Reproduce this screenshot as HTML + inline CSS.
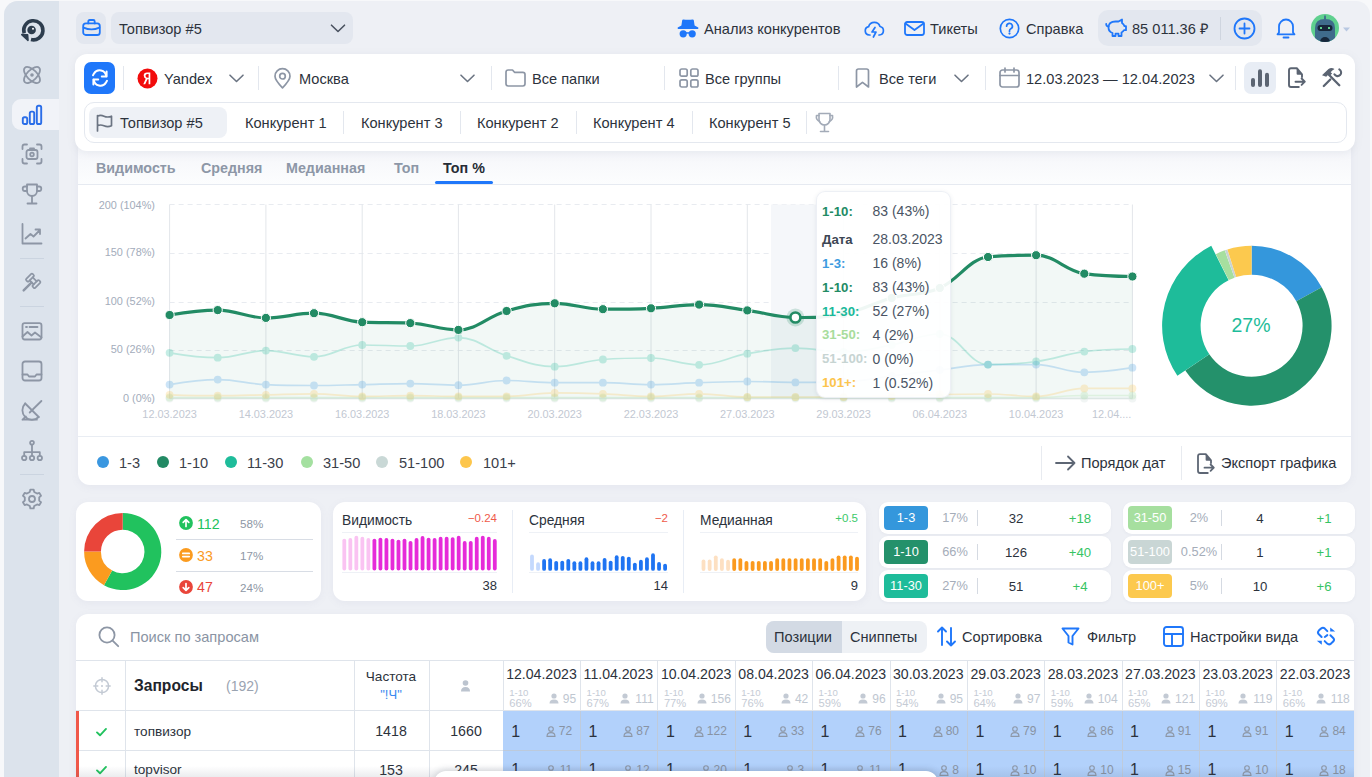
<!DOCTYPE html>
<html><head><meta charset="utf-8">
<style>
*{box-sizing:border-box;margin:0;padding:0}
html,body{width:1372px;height:777px;overflow:hidden}
body{background:#f7f8fa;font-family:"Liberation Sans",sans-serif;color:#2c323c;position:relative}
.a{position:absolute}
.t{position:absolute;white-space:nowrap;line-height:1}
svg{position:absolute;overflow:visible}
.ic{fill:none;stroke:#8d96a5;stroke-width:1.6;stroke-linecap:round;stroke-linejoin:round}
.bl{stroke:#1f77fa}
.card{position:absolute;background:#fff;border-radius:12px;box-shadow:0 2px 8px rgba(110,120,150,.07)}
.vd{position:absolute;width:1px;background:#e3e7ee}
</style></head><body>
<!-- sidebar -->
<div class="a" style="left:4px;top:1px;width:1366px;height:800px;background:#eef0f5;border-radius:14px 14px 0 0"></div>
<div class="a" style="left:4px;top:1px;width:55px;height:800px;background:#dce3ec;border-radius:14px 0 0 0"></div>
<div class="a" style="left:12px;top:99px;width:47px;height:31px;background:#f1f3f8;border-radius:9px 0 0 9px"></div>
<svg style="left:19px;top:17px" width="26" height="26" viewBox="0 0 26 26"><path d="M5.2 16.2A9.6 9.6 0 1 1 12 22.6" fill="none" stroke="#2d3d4e" stroke-width="3.6"/><circle cx="12.6" cy="13" r="4.3" fill="#2d3d4e"/><circle cx="14" cy="11.8" r="1" fill="#fff"/><path d="M2.8 17.6l5.8.2.4 5.6z" fill="#2d3d4e" stroke="#2d3d4e" stroke-width="1.6" stroke-linejoin="round"/></svg>
<svg style="left:21px;top:64px" width="22" height="22" viewBox="0 0 22 22"><g class="ic" style="stroke-width:1.7"><ellipse cx="11" cy="11" rx="10.2" ry="5" transform="rotate(45 11 11)"/><ellipse cx="11" cy="11" rx="10.2" ry="5" transform="rotate(-45 11 11)"/></g><circle cx="11" cy="11" r="1.8" fill="#8d96a5"/></svg>
<svg style="left:21px;top:104px" width="22" height="22" viewBox="0 0 22 22"><g class="ic bl" style="stroke:#2b6ee8;stroke-width:1.9"><rect x="1.8" y="13.2" width="4.4" height="6.8" rx="1.6"/><rect x="8.8" y="7.6" width="4.4" height="12.4" rx="1.6"/><rect x="15.8" y="1.8" width="4.4" height="18.2" rx="1.6"/></g></svg>
<svg style="left:21px;top:143px" width="22" height="22" viewBox="0 0 22 22"><g class="ic" style="stroke-width:1.8"><path d="M1.5 6V3.5q0-2 2-2H6M16 1.5h2.5q2 0 2 2V6M20.5 16v2.5q0 2-2 2H16M6 20.5H3.5q-2 0-2-2V16"/><rect x="5.5" y="7" width="11" height="9" rx="2"/><path d="M9 7V5.5h4V7"/><circle cx="11" cy="11.5" r="1.8"/></g></svg>
<svg style="left:21px;top:183px" width="22" height="22" viewBox="0 0 22 22"><g class="ic" style="stroke-width:1.8"><path d="M6 1.5h10v6.5a5 5 0 0 1-10 0z"/><path d="M6 3.5H4q-2.3 0-2.3 2.3T4 8H6M16 3.5h2q2.3 0 2.3 2.3T18 8H16M11 13v7.2M6.5 20.5h9"/></g></svg>
<svg style="left:21px;top:223px" width="22" height="22" viewBox="0 0 22 22"><g class="ic" style="stroke-width:1.8"><path d="M1.5 1v19.5h19"/><path d="M4.5 15.5l5-4.5 3 2.5 6.5-6.5M14.5 6.5h4.5V11"/></g></svg>
<div class="a" style="left:20px;top:258px;width:24px;height:1px;background:#cbd4e0"></div>
<svg style="left:21px;top:272px" width="22" height="22" viewBox="0 0 22 22"><g class="ic" style="stroke-width:1.7" transform="translate(12.2 8.85) rotate(45) translate(-6 -4.5)"><rect x="-0.3" y="0" width="3.5" height="9" rx="1"/><rect x="8.8" y="0" width="3.5" height="9" rx="1"/><path d="M3.2 2.4h5.6M3.2 6.6h5.6"/><path d="M6 7v11" style="stroke-width:2.4"/></g></svg>
<div class="a" style="left:20px;top:306px;width:24px;height:1px;background:#cbd4e0"></div>
<svg style="left:21px;top:322px" width="22" height="19" viewBox="0 0 22 19"><g class="ic" style="stroke-width:1.8"><rect x="1.5" y="1.2" width="19" height="16.3" rx="2.2"/><path d="M1.5 14.5l5-4.5 4 3.5 3.5-3 6.5 5M5 5h1M8.5 5h8"/></g></svg>
<svg style="left:21px;top:360px" width="22" height="22" viewBox="0 0 22 22"><g class="ic" style="stroke-width:1.8"><rect x="1.5" y="1.5" width="19" height="19" rx="2.5"/><path d="M1.5 14.5h5l1.5 2h6l1.5-2h5"/></g></svg>
<svg style="left:21px;top:400px" width="22" height="22" viewBox="0 0 22 22"><g class="ic" style="stroke-width:1.8"><path d="M4.2 3.5A9.5 9.5 0 0 0 17.7 17"/><path d="M4.2 3.5L17.7 17"/><path d="M8.7 12.5L20.4 1M1.5 19.7h14.4M1.5 19.7l3.4-3.2"/></g></svg>
<svg style="left:21px;top:440px" width="22" height="22" viewBox="0 0 22 22"><g class="ic" style="stroke-width:1.8"><circle cx="11" cy="2.8" r="1.9"/><circle cx="3.2" cy="18" r="2.2"/><circle cx="11" cy="18" r="2.2"/><circle cx="18.8" cy="18" r="2.2"/><path d="M11 4.7v11.1M3.2 15.8v-3.6h15.6v3.6"/></g></svg>
<div class="a" style="left:20px;top:474px;width:24px;height:1px;background:#cbd4e0"></div>
<svg style="left:21px;top:488px" width="22" height="22" viewBox="0 0 22 22"><g class="ic" style="stroke-width:1.8"><path d="M8.84 3.92 L9.33 1.55 L12.67 1.55 L13.16 3.92 L16.05 5.59 L18.35 4.83 L20.02 7.72 L18.21 9.34 L18.21 12.66 L20.02 14.28 L18.35 17.17 L16.05 16.41 L13.16 18.08 L12.67 20.45 L9.33 20.45 L8.84 18.08 L5.95 16.41 L3.65 17.17 L1.98 14.28 L3.79 12.66 L3.79 9.34 L1.98 7.72 L3.65 4.83 L5.95 5.59Z"/><circle cx="11" cy="11" r="3"/></g></svg>
<!-- topbar -->

<!-- topbar -->
<div class="a" style="left:76px;top:12px;width:30px;height:32px;background:#e3e7ef;border-radius:8px"></div>
<svg style="left:82px;top:19px" width="19" height="17" viewBox="0 0 19 17"><g class="ic bl" style="stroke-width:1.8"><rect x="1.2" y="4.4" width="16.6" height="11.6" rx="2.6"/><path d="M6.3 4.4V2.4Q6.3 1 7.7 1h3.6q1.4 0 1.4 1.4v2M1.6 8.6Q9.5 12.2 17.4 8.6"/></g></svg>
<div class="a" style="left:111px;top:12px;width:242px;height:32px;background:#e3e7ef;border-radius:8px"></div>
<div class="t" style="left:119px;top:22px;font-size:14.6px;color:#2c323c">Топвизор #5</div>
<svg style="left:330px;top:24px" width="16" height="9" viewBox="0 0 16 9"><path class="ic" style="stroke:#4a5260;stroke-width:1.6" d="M1.5 1.2l6.5 6.3 6.5-6.3"/></svg>

<svg style="left:677px;top:19px" width="22" height="20" viewBox="0 0 22 20"><g fill="#1f77fa"><path d="M5.2 1.2Q5.4 .3 6.3 .4Q11 1.2 15.7 .4Q16.6 .3 16.8 1.2L17.6 6.6 21.3 8.6Q21.8 9.8 20.8 9.9H1.2Q.2 9.8.7 8.6L4.4 6.6z"/><circle cx="6.2" cy="14.8" r="3.6"/><circle cx="15.2" cy="14.8" r="3.6"/><rect x="8.5" y="13.2" width="4.5" height="1.5"/></g></svg>
<div class="t" style="left:704px;top:22px;font-size:14.6px;color:#2c323c">Анализ конкурентов</div>
<svg style="left:864px;top:21px" width="21" height="18" viewBox="0 0 21 18"><g class="ic bl" style="stroke-width:1.7"><path d="M6 14H5.2A4.2 4.2 0 0 1 4.6 5.7 6 6 0 0 1 16 5.5a4.3 4.3 0 0 1-.6 8.5H15"/><path d="M11 6.5l-3 4.5h4l-2.6 5" /></g></svg>
<svg style="left:904px;top:21px" width="21" height="15" viewBox="0 0 21 15"><g class="ic bl" style="stroke-width:1.8"><rect x="1" y="1" width="19" height="13" rx="2.2"/><path d="M1.5 2.5l9 6.5 9-6.5"/></g></svg>
<div class="t" style="left:930px;top:22px;font-size:14.6px;color:#2c323c">Тикеты</div>
<svg style="left:999px;top:18px" width="21" height="21" viewBox="0 0 21 21"><g class="ic bl" style="stroke-width:1.7"><circle cx="10.5" cy="10.5" r="9.2"/><path d="M7.6 8.2a2.9 2.9 0 1 1 4.2 2.6c-.9.5-1.3 1-1.3 2v.6"/></g><circle cx="10.5" cy="15.6" r="1.1" fill="#1f77fa"/></svg>
<div class="t" style="left:1026px;top:22px;font-size:14.6px;color:#2c323c">Справка</div>

<div class="a" style="left:1098px;top:10px;width:164px;height:36px;background:#e3e7ef;border-radius:10px"></div>
<svg style="left:1105px;top:18px" width="22" height="20" viewBox="0 0 22 20"><g class="ic bl" style="stroke-width:1.8"><path d="M3.5 9.5Q3.5 3.5 10.5 3.5h3l3.5-2v3.5q2 1.2 2.5 3.2h1.5v4h-2q-.8 1.5-2.5 2.3V18h-3v-2.3h-3V18h-3v-3Q3.5 13.5 3.5 9.5z"/><path d="M3.5 8.5Q1 8 1.2 5.8"/></g></svg>
<div class="t" style="left:1132px;top:22px;font-size:14.6px;color:#2c323c">85 011.36 ₽</div>
<div class="a" style="left:1220px;top:17px;width:1px;height:23px;background:#cfd5df"></div>
<svg style="left:1233px;top:17px" width="23" height="23" viewBox="0 0 23 23"><g class="ic bl" style="stroke-width:1.8"><circle cx="11.5" cy="11.5" r="10"/><path d="M11.5 6.5v10M6.5 11.5h10"/></g></svg>
<svg style="left:1276px;top:17px" width="20" height="22" viewBox="0 0 20 22"><g class="ic bl" style="stroke-width:1.8"><path d="M3 15.5V9.5a7 7 0 0 1 14 0v6l1.5 1.8h-17z"/><path d="M7.5 20.5h5"/></g></svg>
<svg style="left:1311px;top:14px" width="30" height="29" viewBox="0 0 30 29"><defs><clipPath id="av"><circle cx="14" cy="14" r="14"/></clipPath></defs><circle cx="14" cy="14" r="14" fill="#5fd08f"/><g clip-path="url(#av)"><path d="M4 30V14Q4 5 14 5t10 9v16z" fill="#3f6b8c"/><rect x="6.5" y="11" width="15" height="6" rx="3" fill="#16263a"/><rect x="9" y="13" width="2" height="2" fill="#5fd08f"/><rect x="17" y="13" width="2" height="2" fill="#5fd08f"/><path d="M9 28a5 5 0 0 1 10 0z" fill="#16263a"/><path d="M13.2 1.5h1.6L15 5h-2z" fill="#3f6b8c"/></g><path d="M32 13.5h7l-3.5 4z" fill="#b8c8e2"/></svg>

<!-- chart card -->
<div class="card" style="left:78px;top:140px;width:1273px;height:345px;border-radius:0 0 12px 12px;overflow:hidden">
<div class="a" style="left:0;top:0;width:1273px;height:44px;background:linear-gradient(#f1f3f8,#f7f8fb 45%,#fcfdfe)"></div>
<div class="a" style="left:0;top:44px;width:1273px;height:1px;background:#e6eaf1"></div>
<div class="a" style="left:0;top:296px;width:1273px;height:1px;background:#e9edf3"></div>
</div>
<!-- filters card -->
<div class="card" style="left:75px;top:54px;width:1280px;height:97px;box-shadow:0 2px 8px rgba(120,130,150,.10)"></div>
<div class="a" style="left:84px;top:62px;width:31px;height:32px;background:#1f77fa;border-radius:7px"></div>
<svg style="left:90px;top:68px" width="20" height="20" viewBox="0 0 20 20"><g class="ic" style="stroke:#fff;stroke-width:2"><path d="M16.2 8.2A6.6 6.6 0 0 0 4 5.6L3 7.2"/><path d="M3.8 11.8A6.6 6.6 0 0 0 16 14.4l1-1.6"/><path d="M16.6 3.6v4.8h-4.8M3.4 16.4v-4.8h4.8"/></g></svg>
<div class="vd" style="left:123px;top:66px;height:24px"></div>
<svg style="left:137px;top:68px" width="21" height="21" viewBox="0 0 21 21"><circle cx="10.5" cy="10.5" r="10" fill="#f20c0c"/><path d="M11.6 4.6h-1.6q-3.3 0-3.3 3 0 2.3 2 3.1L6.3 16.2h1.9l2.3-5h1.1v5h1.7V4.6zM11.6 9.8h-1q-2.1 0-2.1-2.1 0-1.8 2.1-1.8h1z" fill="#fff"/></svg>
<div class="t" style="left:164px;top:72px;font-size:14.6px">Yandex</div>
<svg style="left:229px;top:74px" width="15" height="9" viewBox="0 0 15 9"><path class="ic" style="stroke:#6b7482" d="M1 1.2l6.5 6.3 6.5-6.3"/></svg>
<div class="vd" style="left:258px;top:66px;height:24px"></div>
<svg style="left:274px;top:68px" width="17" height="21" viewBox="0 0 17 21"><g class="ic" style="stroke-width:1.7"><path d="M8.5 19.8Q1 12 1 8.2a7.5 7.5 0 0 1 15 0q0 3.8-7.5 11.6z"/><circle cx="8.5" cy="8.2" r="2.8"/></g></svg>
<div class="t" style="left:299px;top:72px;font-size:14.6px">Москва</div>
<svg style="left:460px;top:74px" width="15" height="9" viewBox="0 0 15 9"><path class="ic" style="stroke:#6b7482" d="M1 1.2l6.5 6.3 6.5-6.3"/></svg>
<div class="vd" style="left:491px;top:66px;height:24px"></div>
<svg style="left:505px;top:69px" width="21" height="18" viewBox="0 0 21 18"><path class="ic" style="stroke-width:1.7" d="M1 3.2Q1 1 3.2 1h4.3l2 2.3h8.3q2.2 0 2.2 2.2v9.3q0 2.2-2.2 2.2H3.2Q1 17 1 14.8z"/></svg>
<div class="t" style="left:532px;top:72px;font-size:14.6px">Все папки</div>
<div class="vd" style="left:664px;top:66px;height:24px"></div>
<svg style="left:679px;top:68px" width="20" height="20" viewBox="0 0 20 20"><g class="ic" style="stroke-width:1.7"><rect x="1" y="1" width="7.2" height="7.2" rx="1.8"/><rect x="11.8" y="1" width="7.2" height="7.2" rx="1.8"/><rect x="1" y="11.8" width="7.2" height="7.2" rx="1.8"/><rect x="11.8" y="11.8" width="7.2" height="7.2" rx="1.8"/></g></svg>
<div class="t" style="left:705px;top:72px;font-size:14.6px">Все группы</div>
<div class="vd" style="left:838px;top:66px;height:24px"></div>
<svg style="left:855px;top:68px" width="15" height="20" viewBox="0 0 15 20"><path class="ic" style="stroke-width:1.7" d="M1.5 3Q1.5 1 3.5 1h8q2 0 2 2v16l-6-4.6-6 4.6z"/></svg>
<div class="t" style="left:879px;top:72px;font-size:14.6px">Все теги</div>
<svg style="left:954px;top:74px" width="15" height="9" viewBox="0 0 15 9"><path class="ic" style="stroke:#6b7482" d="M1 1.2l6.5 6.3 6.5-6.3"/></svg>
<div class="vd" style="left:985px;top:66px;height:24px"></div>
<svg style="left:999px;top:67px" width="21" height="21" viewBox="0 0 21 21"><g class="ic" style="stroke-width:1.7"><rect x="1" y="3" width="19" height="17" rx="2.5"/><path d="M1 8.5h19M6 1v4M15 1v4"/></g></svg>
<div class="t" style="left:1026px;top:72px;font-size:14.6px">12.03.2023 — 12.04.2023</div>
<svg style="left:1209px;top:74px" width="15" height="9" viewBox="0 0 15 9"><path class="ic" style="stroke:#6b7482" d="M1 1.2l6.5 6.3 6.5-6.3"/></svg>
<div class="vd" style="left:1235px;top:66px;height:24px"></div>
<div class="a" style="left:1244px;top:62px;width:32px;height:32px;background:#e8edf5;border-radius:7px"></div>
<svg style="left:1251px;top:69px" width="18" height="19" viewBox="0 0 18 19"><g fill="#5b6472"><rect x="0" y="9" width="4" height="9" rx="2"/><rect x="7" y="0.2" width="4" height="17.8" rx="2"/><rect x="14" y="3.8" width="4" height="14.2" rx="2"/></g></svg>
<svg style="left:1287px;top:67px" width="22" height="22" viewBox="0 0 22 22"><g class="ic" style="stroke:#5b6472;stroke-width:1.9"><path d="M11.8 20H4Q2 20 2 18V3.2Q2 1.2 4 1.2h5.8l5.2 6.2V10"/><path d="M8.5 14.7h9.2M14.6 11.5l3.2 3.2-3.2 3.2"/></g><path d="M9.6 1.2v5.5q0 1 1 1H15z" fill="#5b6472"/></svg>
<svg style="left:1321px;top:67px" width="22" height="22" viewBox="0 0 22 22"><g class="ic" style="stroke:#5b6472;stroke-width:2.3"><path d="M18.3 18.2L7.4 7.2"/><path d="M2.8 19L9.3 12.5"/><path d="M18.3 2.4A3.6 3.6 0 1 1 13.4 7.3" style="stroke-width:2.1"/></g><path d="M1 8.3l6.5-6.4q3-1.7 6 .1l-2.2 1.6-1.6 1.6 1.4 1.4-2.5 2.5-1.4-1.4-2 2z" fill="#5b6472"/></svg>
<div class="a" style="left:84px;top:102px;width:1263px;height:41px;border:1px solid #e4e8ef;border-radius:10px"></div>
<div class="a" style="left:89px;top:107px;width:138px;height:31px;background:#eef1f6;border-radius:8px"></div>
<svg style="left:96px;top:114px" width="17" height="18" viewBox="0 0 17 18"><g class="ic" style="stroke:#6b7482;stroke-width:1.7"><path d="M1.5 17V1.5M1.5 2.2q3-1.6 6.5 0t7.5 0v9.6q-3.8 1.6-7.5 0t-6.5 0"/></g></svg>
<div class="t" style="left:120px;top:116.2px;font-size:14.6px">Топвизор #5</div>
<div class="t" style="left:245px;top:116.2px;font-size:14.6px">Конкурент 1</div>
<div class="vd" style="left:343px;top:111px;height:23px"></div>
<div class="t" style="left:361px;top:116.2px;font-size:14.6px">Конкурент 3</div>
<div class="vd" style="left:460px;top:111px;height:23px"></div>
<div class="t" style="left:477px;top:116.2px;font-size:14.6px">Конкурент 2</div>
<div class="vd" style="left:576px;top:111px;height:23px"></div>
<div class="t" style="left:593px;top:116.2px;font-size:14.6px">Конкурент 4</div>
<div class="vd" style="left:692px;top:111px;height:23px"></div>
<div class="t" style="left:709px;top:116.2px;font-size:14.6px">Конкурент 5</div>
<div class="vd" style="left:806px;top:111px;height:23px"></div>
<svg style="left:814px;top:112px" width="21" height="21" viewBox="0 0 21 21"><g class="ic" style="stroke:#a3abb8;stroke-width:1.6"><path d="M5 1.5h11v6a5.5 5.5 0 0 1-11 0z"/><path d="M5 3.5H2.5q-.8 4.5 3.2 6M16 3.5h2.5q.8 4.5-3.2 6M10.5 13v6M6.5 19.5h8"/></g></svg>

<div class="t" style="left:96px;top:161px;font-size:14.3px;font-weight:bold;color:#8d97a7">Видимость</div>
<div class="t" style="left:201px;top:161px;font-size:14.3px;font-weight:bold;color:#8d97a7">Средняя</div>
<div class="t" style="left:286px;top:161px;font-size:14.3px;font-weight:bold;color:#8d97a7">Медианная</div>
<div class="t" style="left:394px;top:161px;font-size:14.3px;font-weight:bold;color:#8d97a7">Топ</div>
<div class="t" style="left:443px;top:161px;font-size:14.3px;font-weight:bold;color:#262c35">Топ %</div>
<div class="a" style="left:435px;top:181px;width:58px;height:3px;background:#1f77fa;border-radius:2px"></div>

<div class="t" style="left:60px;width:95px;text-align:right;top:199.6px;font-size:10.9px;color:#a3acbb">200 (104%)</div>
<div class="t" style="left:60px;width:95px;text-align:right;top:247px;font-size:10.9px;color:#a3acbb">150 (78%)</div>
<div class="t" style="left:60px;width:95px;text-align:right;top:296px;font-size:10.9px;color:#a3acbb">100 (52%)</div>
<div class="t" style="left:60px;width:95px;text-align:right;top:344px;font-size:10.9px;color:#a3acbb">50 (26%)</div>
<div class="t" style="left:60px;width:95px;text-align:right;top:393px;font-size:10.9px;color:#a3acbb">0 (0%)</div>
<svg style="left:0;top:0" width="1372" height="777" viewBox="0 0 1372 777">
<path d="M169.6 204.5H1132.4" stroke="#e8ebf0" stroke-width="1" stroke-dasharray="5 4"/>
<path d="M169.6 253.5H1132.4" stroke="#e8ebf0" stroke-width="1" stroke-dasharray="5 4"/>
<path d="M169.6 302.5H1132.4" stroke="#e8ebf0" stroke-width="1" stroke-dasharray="5 4"/>
<path d="M169.6 350.5H1132.4" stroke="#e8ebf0" stroke-width="1" stroke-dasharray="5 4"/>
<path d="M169.6 204.5V398.5" stroke="#e3e6ea" stroke-width="1"/>
<path d="M265.9 204.5V398.5" stroke="#e3e6ea" stroke-width="1"/>
<path d="M362.2 204.5V398.5" stroke="#e3e6ea" stroke-width="1"/>
<path d="M458.4 204.5V398.5" stroke="#e3e6ea" stroke-width="1"/>
<path d="M554.7 204.5V398.5" stroke="#e3e6ea" stroke-width="1"/>
<path d="M651.0 204.5V398.5" stroke="#e3e6ea" stroke-width="1"/>
<path d="M747.3 204.5V398.5" stroke="#e3e6ea" stroke-width="1"/>
<path d="M843.6 204.5V398.5" stroke="#e3e6ea" stroke-width="1"/>
<path d="M939.8 204.5V398.5" stroke="#e3e6ea" stroke-width="1"/>
<path d="M1036.1 204.5V398.5" stroke="#e3e6ea" stroke-width="1"/>
<path d="M1132.4 204.5V398.5" stroke="#e3e6ea" stroke-width="1"/>
<rect x="771" y="204.5" width="49" height="194" fill="#f5f7fa"/>
<path d="M169.6 315.0 C169.6 315.0 198.5 310.1 217.7 310.1 C237.0 310.1 246.6 317.9 265.9 317.9 C285.1 317.9 294.8 313.2 314.0 313.2 C333.3 313.2 342.9 321.3 362.2 322.2 C381.4 323.1 391.0 322.2 410.3 323.1 C429.6 324.0 439.2 329.9 458.4 329.9 C477.7 329.9 487.3 316.3 506.6 311.0 C525.8 305.7 535.5 303.3 554.7 303.3 C574.0 303.3 583.6 309.2 602.9 309.2 C622.1 309.2 631.7 309.2 651.0 308.3 C670.3 307.4 679.9 304.6 699.1 304.6 C718.4 304.6 728.0 307.8 747.3 310.4 C766.5 313.0 776.2 317.5 795.4 317.5 C814.7 317.5 824.3 317.5 843.6 314.0 C862.8 310.5 872.4 303.2 891.7 298.0 C911.0 292.8 920.6 296.2 939.8 288.0 C959.1 279.8 968.7 258.8 988.0 257.0 C1007.2 255.2 1016.9 255.2 1036.1 255.2 C1055.4 255.2 1065.0 270.9 1084.3 273.7 C1103.5 276.5 1132.4 276.5 1132.4 276.5 L1132.4 398.5 L169.6 398.5 Z" fill="#228b64" fill-opacity=".06"/>
<path d="M169.6 398.5H1132.4" stroke="#e3ece9" stroke-width="1.5"/>
<g opacity=".25"><path d="M169.6 398.5 C169.6 398.5 198.5 398.5 217.7 398.5 C237.0 398.5 246.6 398.5 265.9 398.5 C285.1 398.5 294.8 398.5 314.0 398.5 C333.3 398.5 342.9 398.5 362.2 398.5 C381.4 398.5 391.0 398.5 410.3 398.5 C429.6 398.5 439.2 398.5 458.4 398.5 C477.7 398.5 487.3 398.5 506.6 398.5 C525.8 398.5 535.5 398.5 554.7 398.5 C574.0 398.5 583.6 398.5 602.9 398.5 C622.1 398.5 631.7 398.5 651.0 398.5 C670.3 398.5 679.9 398.5 699.1 398.5 C718.4 398.5 728.0 398.5 747.3 398.5 C766.5 398.5 776.2 398.5 795.4 398.5 C814.7 398.5 824.3 398.5 843.6 398.5 C862.8 398.5 872.4 398.5 891.7 398.5 C911.0 398.5 920.6 398.5 939.8 398.5 C959.1 398.5 968.7 398.5 988.0 398.5 C1007.2 398.5 1016.9 398.5 1036.1 398.5 C1055.4 398.5 1065.0 398.5 1084.3 398.5 C1103.5 398.5 1132.4 398.5 1132.4 398.5" fill="none" stroke="#c9d8d6" stroke-width="1.7"/><circle cx="169.6" cy="398.5" r="3.9" fill="#c9d8d6"/><circle cx="217.7" cy="398.5" r="3.9" fill="#c9d8d6"/><circle cx="265.9" cy="398.5" r="3.9" fill="#c9d8d6"/><circle cx="314.0" cy="398.5" r="3.9" fill="#c9d8d6"/><circle cx="362.2" cy="398.5" r="3.9" fill="#c9d8d6"/><circle cx="410.3" cy="398.5" r="3.9" fill="#c9d8d6"/><circle cx="458.4" cy="398.5" r="3.9" fill="#c9d8d6"/><circle cx="506.6" cy="398.5" r="3.9" fill="#c9d8d6"/><circle cx="554.7" cy="398.5" r="3.9" fill="#c9d8d6"/><circle cx="602.9" cy="398.5" r="3.9" fill="#c9d8d6"/><circle cx="651.0" cy="398.5" r="3.9" fill="#c9d8d6"/><circle cx="699.1" cy="398.5" r="3.9" fill="#c9d8d6"/><circle cx="747.3" cy="398.5" r="3.9" fill="#c9d8d6"/><circle cx="795.4" cy="398.5" r="3.9" fill="#c9d8d6"/><circle cx="843.6" cy="398.5" r="3.9" fill="#c9d8d6"/><circle cx="891.7" cy="398.5" r="3.9" fill="#c9d8d6"/><circle cx="939.8" cy="398.5" r="3.9" fill="#c9d8d6"/><circle cx="988.0" cy="398.5" r="3.9" fill="#c9d8d6"/><circle cx="1036.1" cy="398.5" r="3.9" fill="#c9d8d6"/><circle cx="1084.3" cy="398.5" r="3.9" fill="#c9d8d6"/><circle cx="1132.4" cy="398.5" r="3.9" fill="#c9d8d6"/></g>
<g opacity=".25"><path d="M169.6 397.5 C169.6 397.5 198.5 397.5 217.7 397.5 C237.0 397.5 246.6 397.5 265.9 397.5 C285.1 397.5 294.8 397.5 314.0 397.5 C333.3 397.5 342.9 397.5 362.2 397.5 C381.4 397.5 391.0 397.5 410.3 397.5 C429.6 397.5 439.2 397.5 458.4 397.5 C477.7 397.5 487.3 397.5 506.6 397.5 C525.8 397.5 535.5 397.5 554.7 397.5 C574.0 397.5 583.6 397.5 602.9 397.5 C622.1 397.5 631.7 397.5 651.0 397.5 C670.3 397.5 679.9 397.5 699.1 397.5 C718.4 397.5 728.0 397.5 747.3 397.5 C766.5 397.5 776.2 397.5 795.4 397.5 C814.7 397.5 824.3 397.5 843.6 397.5 C862.8 397.5 872.4 397.5 891.7 397.5 C911.0 397.5 920.6 397.5 939.8 397.5 C959.1 397.5 968.7 397.5 988.0 397.5 C1007.2 397.5 1016.9 397.5 1036.1 397.5 C1055.4 397.5 1065.0 395.5 1084.3 395.5 C1103.5 395.5 1132.4 395.5 1132.4 395.5" fill="none" stroke="#a4e0a0" stroke-width="1.7"/><circle cx="169.6" cy="397.5" r="3.9" fill="#a4e0a0"/><circle cx="217.7" cy="397.5" r="3.9" fill="#a4e0a0"/><circle cx="265.9" cy="397.5" r="3.9" fill="#a4e0a0"/><circle cx="314.0" cy="397.5" r="3.9" fill="#a4e0a0"/><circle cx="362.2" cy="397.5" r="3.9" fill="#a4e0a0"/><circle cx="410.3" cy="397.5" r="3.9" fill="#a4e0a0"/><circle cx="458.4" cy="397.5" r="3.9" fill="#a4e0a0"/><circle cx="506.6" cy="397.5" r="3.9" fill="#a4e0a0"/><circle cx="554.7" cy="397.5" r="3.9" fill="#a4e0a0"/><circle cx="602.9" cy="397.5" r="3.9" fill="#a4e0a0"/><circle cx="651.0" cy="397.5" r="3.9" fill="#a4e0a0"/><circle cx="699.1" cy="397.5" r="3.9" fill="#a4e0a0"/><circle cx="747.3" cy="397.5" r="3.9" fill="#a4e0a0"/><circle cx="795.4" cy="397.5" r="3.9" fill="#a4e0a0"/><circle cx="843.6" cy="397.5" r="3.9" fill="#a4e0a0"/><circle cx="891.7" cy="397.5" r="3.9" fill="#a4e0a0"/><circle cx="939.8" cy="397.5" r="3.9" fill="#a4e0a0"/><circle cx="988.0" cy="397.5" r="3.9" fill="#a4e0a0"/><circle cx="1036.1" cy="397.5" r="3.9" fill="#a4e0a0"/><circle cx="1084.3" cy="395.5" r="3.9" fill="#a4e0a0"/><circle cx="1132.4" cy="395.5" r="3.9" fill="#a4e0a0"/></g>
<g opacity=".25"><path d="M169.6 394.8 C169.6 394.8 198.5 395.7 217.7 395.7 C237.0 395.7 246.6 395.2 265.9 394.8 C285.1 394.4 294.8 393.8 314.0 393.8 C333.3 393.8 342.9 396.3 362.2 396.3 C381.4 396.3 391.0 395.7 410.3 395.7 C429.6 395.7 439.2 396.3 458.4 396.3 C477.7 396.3 487.3 396.3 506.6 396.3 C525.8 396.3 535.5 392.9 554.7 392.9 C574.0 392.9 583.6 393.1 602.9 393.8 C622.1 394.5 631.7 396.3 651.0 396.3 C670.3 396.3 679.9 393.8 699.1 393.8 C718.4 393.8 728.0 397.0 747.3 397.0 C766.5 397.0 776.2 397.0 795.4 397.0 C814.7 397.0 824.3 397.0 843.6 397.0 C862.8 397.0 872.4 396.5 891.7 396.0 C911.0 395.5 920.6 394.9 939.8 394.5 C959.1 394.1 968.7 394.0 988.0 394.0 C1007.2 394.0 1016.9 396.4 1036.1 396.4 C1055.4 396.4 1065.0 388.4 1084.3 388.4 C1103.5 388.4 1132.4 388.4 1132.4 388.4" fill="none" stroke="#fcc44d" stroke-width="1.7"/><circle cx="169.6" cy="394.8" r="3.9" fill="#fcc44d"/><circle cx="217.7" cy="395.7" r="3.9" fill="#fcc44d"/><circle cx="265.9" cy="394.8" r="3.9" fill="#fcc44d"/><circle cx="314.0" cy="393.8" r="3.9" fill="#fcc44d"/><circle cx="362.2" cy="396.3" r="3.9" fill="#fcc44d"/><circle cx="410.3" cy="395.7" r="3.9" fill="#fcc44d"/><circle cx="458.4" cy="396.3" r="3.9" fill="#fcc44d"/><circle cx="506.6" cy="396.3" r="3.9" fill="#fcc44d"/><circle cx="554.7" cy="392.9" r="3.9" fill="#fcc44d"/><circle cx="602.9" cy="393.8" r="3.9" fill="#fcc44d"/><circle cx="651.0" cy="396.3" r="3.9" fill="#fcc44d"/><circle cx="699.1" cy="393.8" r="3.9" fill="#fcc44d"/><circle cx="747.3" cy="397.0" r="3.9" fill="#fcc44d"/><circle cx="795.4" cy="397.0" r="3.9" fill="#fcc44d"/><circle cx="843.6" cy="397.0" r="3.9" fill="#fcc44d"/><circle cx="891.7" cy="396.0" r="3.9" fill="#fcc44d"/><circle cx="939.8" cy="394.5" r="3.9" fill="#fcc44d"/><circle cx="988.0" cy="394.0" r="3.9" fill="#fcc44d"/><circle cx="1036.1" cy="396.4" r="3.9" fill="#fcc44d"/><circle cx="1084.3" cy="388.4" r="3.9" fill="#fcc44d"/><circle cx="1132.4" cy="388.4" r="3.9" fill="#fcc44d"/></g>
<g opacity=".25"><path d="M169.6 384.6 C169.6 384.6 198.5 379.6 217.7 379.6 C237.0 379.6 246.6 383.7 265.9 384.6 C285.1 385.5 294.8 385.5 314.0 385.5 C333.3 385.5 342.9 385.0 362.2 384.6 C381.4 384.2 391.0 383.6 410.3 383.6 C429.6 383.6 439.2 385.2 458.4 385.2 C477.7 385.2 487.3 380.5 506.6 380.5 C525.8 380.5 535.5 382.7 554.7 382.7 C574.0 382.7 583.6 382.7 602.9 382.7 C622.1 382.7 631.7 384.6 651.0 384.6 C670.3 384.6 679.9 383.3 699.1 382.7 C718.4 382.1 728.0 381.5 747.3 381.5 C766.5 381.5 776.2 382.4 795.4 382.4 C814.7 382.4 824.3 382.4 843.6 382.0 C862.8 381.6 872.4 378.4 891.7 376.0 C911.0 373.6 920.6 372.3 939.8 370.0 C959.1 367.7 968.7 364.6 988.0 364.6 C1007.2 364.6 1016.9 364.6 1036.1 364.6 C1055.4 364.6 1065.0 372.3 1084.3 372.3 C1103.5 372.3 1132.4 367.7 1132.4 367.7" fill="none" stroke="#3a97e0" stroke-width="1.7"/><circle cx="169.6" cy="384.6" r="3.9" fill="#3a97e0"/><circle cx="217.7" cy="379.6" r="3.9" fill="#3a97e0"/><circle cx="265.9" cy="384.6" r="3.9" fill="#3a97e0"/><circle cx="314.0" cy="385.5" r="3.9" fill="#3a97e0"/><circle cx="362.2" cy="384.6" r="3.9" fill="#3a97e0"/><circle cx="410.3" cy="383.6" r="3.9" fill="#3a97e0"/><circle cx="458.4" cy="385.2" r="3.9" fill="#3a97e0"/><circle cx="506.6" cy="380.5" r="3.9" fill="#3a97e0"/><circle cx="554.7" cy="382.7" r="3.9" fill="#3a97e0"/><circle cx="602.9" cy="382.7" r="3.9" fill="#3a97e0"/><circle cx="651.0" cy="384.6" r="3.9" fill="#3a97e0"/><circle cx="699.1" cy="382.7" r="3.9" fill="#3a97e0"/><circle cx="747.3" cy="381.5" r="3.9" fill="#3a97e0"/><circle cx="795.4" cy="382.4" r="3.9" fill="#3a97e0"/><circle cx="843.6" cy="382.0" r="3.9" fill="#3a97e0"/><circle cx="891.7" cy="376.0" r="3.9" fill="#3a97e0"/><circle cx="939.8" cy="370.0" r="3.9" fill="#3a97e0"/><circle cx="988.0" cy="364.6" r="3.9" fill="#3a97e0"/><circle cx="1036.1" cy="364.6" r="3.9" fill="#3a97e0"/><circle cx="1084.3" cy="372.3" r="3.9" fill="#3a97e0"/><circle cx="1132.4" cy="367.7" r="3.9" fill="#3a97e0"/></g>
<g opacity=".25"><path d="M169.6 352.8 C169.6 352.8 198.5 357.7 217.7 357.7 C237.0 357.7 246.6 350.6 265.9 350.6 C285.1 350.6 294.8 356.8 314.0 356.8 C333.3 356.8 342.9 345.0 362.2 345.0 C381.4 345.0 391.0 346.0 410.3 346.0 C429.6 346.0 439.2 337.6 458.4 337.6 C477.7 337.6 487.3 350.0 506.6 355.8 C525.8 361.6 535.5 366.7 554.7 366.7 C574.0 366.7 583.6 361.0 602.9 359.5 C622.1 358.0 631.7 358.0 651.0 358.0 C670.3 358.0 679.9 364.8 699.1 364.8 C718.4 364.8 728.0 357.0 747.3 353.7 C766.5 350.4 776.2 348.1 795.4 348.1 C814.7 348.1 824.3 352.0 843.6 352.0 C862.8 352.0 872.4 348.6 891.7 345.0 C911.0 341.4 920.6 334.0 939.8 334.0 C959.1 334.0 968.7 364.6 988.0 364.6 C1007.2 364.6 1016.9 364.1 1036.1 361.5 C1055.4 358.9 1065.0 354.1 1084.3 351.6 C1103.5 349.1 1132.4 349.0 1132.4 349.0" fill="none" stroke="#1ebc9a" stroke-width="1.7"/><circle cx="169.6" cy="352.8" r="3.9" fill="#1ebc9a"/><circle cx="217.7" cy="357.7" r="3.9" fill="#1ebc9a"/><circle cx="265.9" cy="350.6" r="3.9" fill="#1ebc9a"/><circle cx="314.0" cy="356.8" r="3.9" fill="#1ebc9a"/><circle cx="362.2" cy="345.0" r="3.9" fill="#1ebc9a"/><circle cx="410.3" cy="346.0" r="3.9" fill="#1ebc9a"/><circle cx="458.4" cy="337.6" r="3.9" fill="#1ebc9a"/><circle cx="506.6" cy="355.8" r="3.9" fill="#1ebc9a"/><circle cx="554.7" cy="366.7" r="3.9" fill="#1ebc9a"/><circle cx="602.9" cy="359.5" r="3.9" fill="#1ebc9a"/><circle cx="651.0" cy="358.0" r="3.9" fill="#1ebc9a"/><circle cx="699.1" cy="364.8" r="3.9" fill="#1ebc9a"/><circle cx="747.3" cy="353.7" r="3.9" fill="#1ebc9a"/><circle cx="795.4" cy="348.1" r="3.9" fill="#1ebc9a"/><circle cx="843.6" cy="352.0" r="3.9" fill="#1ebc9a"/><circle cx="891.7" cy="345.0" r="3.9" fill="#1ebc9a"/><circle cx="939.8" cy="334.0" r="3.9" fill="#1ebc9a"/><circle cx="988.0" cy="364.6" r="3.9" fill="#1ebc9a"/><circle cx="1036.1" cy="361.5" r="3.9" fill="#1ebc9a"/><circle cx="1084.3" cy="351.6" r="3.9" fill="#1ebc9a"/><circle cx="1132.4" cy="349.0" r="3.9" fill="#1ebc9a"/></g>
<path d="M169.6 315.0 C169.6 315.0 198.5 310.1 217.7 310.1 C237.0 310.1 246.6 317.9 265.9 317.9 C285.1 317.9 294.8 313.2 314.0 313.2 C333.3 313.2 342.9 321.3 362.2 322.2 C381.4 323.1 391.0 322.2 410.3 323.1 C429.6 324.0 439.2 329.9 458.4 329.9 C477.7 329.9 487.3 316.3 506.6 311.0 C525.8 305.7 535.5 303.3 554.7 303.3 C574.0 303.3 583.6 309.2 602.9 309.2 C622.1 309.2 631.7 309.2 651.0 308.3 C670.3 307.4 679.9 304.6 699.1 304.6 C718.4 304.6 728.0 307.8 747.3 310.4 C766.5 313.0 776.2 317.5 795.4 317.5 C814.7 317.5 824.3 317.5 843.6 314.0 C862.8 310.5 872.4 303.2 891.7 298.0 C911.0 292.8 920.6 296.2 939.8 288.0 C959.1 279.8 968.7 258.8 988.0 257.0 C1007.2 255.2 1016.9 255.2 1036.1 255.2 C1055.4 255.2 1065.0 270.9 1084.3 273.7 C1103.5 276.5 1132.4 276.5 1132.4 276.5" fill="none" stroke="#228b64" stroke-width="3.2"/>
<circle cx="169.6" cy="315.0" r="4.6" fill="#228b64" stroke="#fff" stroke-width="1"/>
<circle cx="217.7" cy="310.1" r="4.6" fill="#228b64" stroke="#fff" stroke-width="1"/>
<circle cx="265.9" cy="317.9" r="4.6" fill="#228b64" stroke="#fff" stroke-width="1"/>
<circle cx="314.0" cy="313.2" r="4.6" fill="#228b64" stroke="#fff" stroke-width="1"/>
<circle cx="362.2" cy="322.2" r="4.6" fill="#228b64" stroke="#fff" stroke-width="1"/>
<circle cx="410.3" cy="323.1" r="4.6" fill="#228b64" stroke="#fff" stroke-width="1"/>
<circle cx="458.4" cy="329.9" r="4.6" fill="#228b64" stroke="#fff" stroke-width="1"/>
<circle cx="506.6" cy="311.0" r="4.6" fill="#228b64" stroke="#fff" stroke-width="1"/>
<circle cx="554.7" cy="303.3" r="4.6" fill="#228b64" stroke="#fff" stroke-width="1"/>
<circle cx="602.9" cy="309.2" r="4.6" fill="#228b64" stroke="#fff" stroke-width="1"/>
<circle cx="651.0" cy="308.3" r="4.6" fill="#228b64" stroke="#fff" stroke-width="1"/>
<circle cx="699.1" cy="304.6" r="4.6" fill="#228b64" stroke="#fff" stroke-width="1"/>
<circle cx="747.3" cy="310.4" r="4.6" fill="#228b64" stroke="#fff" stroke-width="1"/>
<circle cx="843.6" cy="314.0" r="4.6" fill="#228b64" stroke="#fff" stroke-width="1"/>
<circle cx="891.7" cy="298.0" r="4.6" fill="#228b64" stroke="#fff" stroke-width="1"/>
<circle cx="939.8" cy="288.0" r="4.6" fill="#228b64" stroke="#fff" stroke-width="1"/>
<circle cx="988.0" cy="257.0" r="4.6" fill="#228b64" stroke="#fff" stroke-width="1"/>
<circle cx="1036.1" cy="255.2" r="4.6" fill="#228b64" stroke="#fff" stroke-width="1"/>
<circle cx="1084.3" cy="273.7" r="4.6" fill="#228b64" stroke="#fff" stroke-width="1"/>
<circle cx="1132.4" cy="276.5" r="4.6" fill="#228b64" stroke="#fff" stroke-width="1"/>
<circle cx="795.4" cy="317.5" r="9" fill="#228b64" opacity=".2"/>
<circle cx="795.4" cy="317.5" r="5" fill="#fff" stroke="#228b64" stroke-width="2.6"/>
<path d="M1251.60 245.70 A80 80 0 0 1 1321.70 287.16 L1296.29 301.13 A51 51 0 0 0 1251.60 274.70 Z" fill="#3497dc"/>
<path d="M1321.70 287.16 A80 80 0 0 1 1185.28 370.44 L1209.32 354.22 A51 51 0 0 0 1296.29 301.13 Z" fill="#24916b"/>
<path d="M1177.40 375.75 A89.5 89.5 0 0 1 1211.25 245.81 L1228.61 280.18 A51 51 0 0 0 1209.32 354.22 Z" fill="#1ebc9a"/>
<path d="M1215.78 254.17 A80 80 0 0 1 1224.76 250.34 L1234.49 277.66 A51 51 0 0 0 1228.76 280.10 Z" fill="#a6df9f"/>
<path d="M1224.90 250.29 A80 80 0 0 1 1227.28 249.49 L1236.09 277.11 A51 51 0 0 0 1234.58 277.63 Z" fill="#c9d3d3"/>
<path d="M1227.41 249.44 A80 80 0 0 1 1251.60 245.70 L1251.60 274.70 A51 51 0 0 0 1236.18 277.09 Z" fill="#fcc94e"/>
</svg>
<div class="t" style="left:129.6px;width:80px;text-align:center;top:409px;font-size:10.9px;color:#c2c8d2">12.03.2023</div>
<div class="t" style="left:225.9px;width:80px;text-align:center;top:409px;font-size:10.9px;color:#c2c8d2">14.03.2023</div>
<div class="t" style="left:322.2px;width:80px;text-align:center;top:409px;font-size:10.9px;color:#c2c8d2">16.03.2023</div>
<div class="t" style="left:418.4px;width:80px;text-align:center;top:409px;font-size:10.9px;color:#c2c8d2">18.03.2023</div>
<div class="t" style="left:514.7px;width:80px;text-align:center;top:409px;font-size:10.9px;color:#c2c8d2">20.03.2023</div>
<div class="t" style="left:611.0px;width:80px;text-align:center;top:409px;font-size:10.9px;color:#c2c8d2">22.03.2023</div>
<div class="t" style="left:707.3px;width:80px;text-align:center;top:409px;font-size:10.9px;color:#c2c8d2">27.03.2023</div>
<div class="t" style="left:803.6px;width:80px;text-align:center;top:409px;font-size:10.9px;color:#c2c8d2">29.03.2023</div>
<div class="t" style="left:899.8px;width:80px;text-align:center;top:409px;font-size:10.9px;color:#c2c8d2">06.04.2023</div>
<div class="t" style="left:996.1px;width:80px;text-align:center;top:409px;font-size:10.9px;color:#c2c8d2">10.04.2023</div>
<div class="t" style="left:1092px;top:409px;font-size:10.9px;color:#c2c8d2">12.04....</div>

<div class="t" style="left:1201px;width:100px;text-align:center;top:316px;font-size:19.5px;color:#1ebc9a">27%</div>

<div class="a" style="left:816px;top:191px;width:135px;height:207px;background:rgba(255,255,255,.93);border-radius:9px;box-shadow:0 1px 4px rgba(90,100,120,.12);border:1px solid rgba(225,230,238,.6)"></div>
<div class="t" style="left:822px;top:204.5px;font-size:13.2px;color:#228b64;font-weight:bold">1-10:</div><div class="t" style="left:872.5px;top:204px;font-size:14px;color:#4a5464">83 (43%)</div>
<div class="t" style="left:822px;top:232.5px;font-size:13.2px;color:#3d4654;font-weight:bold">Дата</div><div class="t" style="left:872.5px;top:232px;font-size:14px;color:#4a5464">28.03.2023</div>
<div class="t" style="left:822px;top:256.5px;font-size:13.2px;color:#3d9be0;font-weight:bold">1-3:</div><div class="t" style="left:872.5px;top:256px;font-size:14px;color:#4a5464">16 (8%)</div>
<div class="t" style="left:822px;top:280.5px;font-size:13.2px;color:#228b64;font-weight:bold">1-10:</div><div class="t" style="left:872.5px;top:280px;font-size:14px;color:#4a5464">83 (43%)</div>
<div class="t" style="left:822px;top:304.5px;font-size:13.2px;color:#1ab99a;font-weight:bold">11-30:</div><div class="t" style="left:872.5px;top:304px;font-size:14px;color:#4a5464">52 (27%)</div>
<div class="t" style="left:822px;top:328px;font-size:13.2px;color:#a8dc9c;font-weight:bold">31-50:</div><div class="t" style="left:872.5px;top:327.5px;font-size:14px;color:#4a5464">4 (2%)</div>
<div class="t" style="left:822px;top:352px;font-size:13.2px;color:#c6d4d2;font-weight:bold">51-100:</div><div class="t" style="left:872.5px;top:351.5px;font-size:14px;color:#4a5464">0 (0%)</div>
<div class="t" style="left:822px;top:376px;font-size:13.2px;color:#fcc44d;font-weight:bold">101+:</div><div class="t" style="left:872.5px;top:375.5px;font-size:14px;color:#4a5464">1 (0.52%)</div>

<div class="a" style="left:97px;top:456px;width:12px;height:12px;border-radius:6px;background:#3a97e0"></div><div class="t" style="left:119px;top:456px;font-size:14.6px;color:#3a404a">1-3</div>
<div class="a" style="left:157px;top:456px;width:12px;height:12px;border-radius:6px;background:#228a64"></div><div class="t" style="left:179px;top:456px;font-size:14.6px;color:#3a404a">1-10</div>
<div class="a" style="left:225px;top:456px;width:12px;height:12px;border-radius:6px;background:#1ebc9a"></div><div class="t" style="left:247px;top:456px;font-size:14.6px;color:#3a404a">11-30</div>
<div class="a" style="left:301px;top:456px;width:12px;height:12px;border-radius:6px;background:#a4e0a0"></div><div class="t" style="left:323px;top:456px;font-size:14.6px;color:#3a404a">31-50</div>
<div class="a" style="left:376px;top:456px;width:12px;height:12px;border-radius:6px;background:#c9d8d6"></div><div class="t" style="left:399px;top:456px;font-size:14.6px;color:#3a404a">51-100</div>
<div class="a" style="left:460px;top:456px;width:12px;height:12px;border-radius:6px;background:#fdc64c"></div><div class="t" style="left:483px;top:456px;font-size:14.6px;color:#3a404a">101+</div>

<div class="vd" style="left:1041px;top:446px;height:34px;background:#e8ebf0"></div>
<svg style="left:1055px;top:455px" width="21" height="16" viewBox="0 0 21 16"><g class="ic" style="stroke:#5d6674;stroke-width:1.8"><path d="M1 8h18.5M13 1.5L19.5 8 13 14.5"/></g></svg>
<div class="t" style="left:1081px;top:456px;font-size:14.6px;color:#2c323c">Порядок дат</div>
<div class="vd" style="left:1181px;top:446px;height:34px;background:#e8ebf0"></div>
<svg style="left:1196px;top:453px" width="22" height="22" viewBox="0 0 22 22"><g class="ic" style="stroke:#5d6674;stroke-width:1.8"><path d="M11.8 20H4Q2 20 2 18V3.2Q2 1.2 4 1.2h5.8l5.2 6.2V10"/><path d="M8.5 14.7h9.2M14.6 11.5l3.2 3.2-3.2 3.2"/></g><path d="M9.6 1.2v5.5q0 1 1 1H15z" fill="#5d6674"/></svg>
<div class="t" style="left:1221px;top:456px;font-size:14.6px;color:#2c323c">Экспорт графика</div>

<!-- stats -->
<div class="card" style="left:76px;top:502px;width:245px;height:99px"></div>
<svg style="left:0;top:0" width="1372" height="777" viewBox="0 0 1372 777"><path d="M122.70 512.90 A38.6 38.6 0 1 1 103.99 585.26 L112.13 570.57 A21.8 21.8 0 1 0 122.70 529.70 Z" fill="#21c25e"/><path d="M103.99 585.26 A38.6 38.6 0 0 1 84.10 551.50 L100.90 551.50 A21.8 21.8 0 0 0 112.13 570.57 Z" fill="#fb9b1f"/><path d="M84.10 551.50 A38.6 38.6 0 0 1 122.70 512.90 L122.70 529.70 A21.8 21.8 0 0 0 100.90 551.50 Z" fill="#e9453a"/></svg>
<svg style="left:178.5px;top:516.2px" width="14" height="14" viewBox="0 0 14 14"><circle cx="7" cy="7" r="6.9" fill="#21c25e"/><path d="M7 10.5V3.8M4.2 6.4L7 3.6l2.8 2.8" stroke="#fff" stroke-width="1.7" fill="none" stroke-linecap="round" stroke-linejoin="round"/></svg>
<div class="t" style="left:197px;top:516.6px;font-size:14.2px;color:#21c25e">112</div>
<div class="t" style="left:240px;top:518.4px;font-size:11.6px;color:#8e97a5">58%</div>
<svg style="left:178.5px;top:548.2px" width="14" height="14" viewBox="0 0 14 14"><circle cx="7" cy="7" r="6.9" fill="#fb9b1f"/><path d="M3.8 5.4h6.4M3.8 8.6h6.4" stroke="#fff" stroke-width="1.7" stroke-linecap="round"/></svg>
<div class="t" style="left:197px;top:548.6px;font-size:14.2px;color:#fb9b1f">33</div>
<div class="t" style="left:240px;top:550.4px;font-size:11.6px;color:#8e97a5">17%</div>
<svg style="left:178.5px;top:579.8px" width="14" height="14" viewBox="0 0 14 14"><circle cx="7" cy="7" r="6.9" fill="#e9453a"/><path d="M7 3.5v6.7M4.2 7.6L7 10.4l2.8-2.8" stroke="#fff" stroke-width="1.7" fill="none" stroke-linecap="round" stroke-linejoin="round"/></svg>
<div class="t" style="left:197px;top:580.2px;font-size:14.2px;color:#e9453a">47</div>
<div class="t" style="left:240px;top:582.0px;font-size:11.6px;color:#8e97a5">24%</div>
<div class="a" style="left:176px;top:538.5px;width:137px;height:1.5px;background:#d8dde5"></div>
<div class="a" style="left:176px;top:570.5px;width:137px;height:1.5px;background:#d8dde5"></div>
<div class="card" style="left:333px;top:502px;width:533px;height:99px"></div>
<div class="vd" style="left:512px;top:510px;height:83px;background:#e8edf5"></div>
<div class="vd" style="left:683px;top:510px;height:83px;background:#e8edf5"></div>
<div class="t" style="left:342px;top:514px;font-size:13.8px;color:#2c323c">Видимость</div>
<div class="t" style="left:437px;width:60px;text-align:right;top:512.5px;font-size:11.5px;color:#ef5a4a">−0.24</div>
<div class="a" style="left:342px;top:531.5px;width:155px;height:1px;background:#eef1f6"></div>
<div class="a" style="left:342px;top:572px;width:155px;height:1px;background:#eef1f6"></div>
<div class="t" style="left:437px;width:60px;text-align:right;top:578.5px;font-size:13px;color:#2c323c">38</div>
<svg style="left:0;top:0" width="1372" height="777" viewBox="0 0 1372 777"><rect x="342.40" y="538.71" width="3.8" height="31.79" rx="1.9" fill="#fac3f2"/><rect x="348.42" y="538.06" width="3.8" height="32.44" rx="1.9" fill="#fac3f2"/><rect x="354.44" y="535.83" width="3.8" height="34.67" rx="1.9" fill="#fac3f2"/><rect x="360.46" y="536.75" width="3.8" height="33.75" rx="1.9" fill="#fac3f2"/><rect x="366.48" y="538.06" width="3.8" height="32.44" rx="1.9" fill="#fac3f2"/><rect x="372.50" y="538.71" width="3.8" height="31.79" rx="1.9" fill="#e62bd9"/><rect x="378.52" y="537.66" width="3.8" height="32.84" rx="1.9" fill="#e62bd9"/><rect x="384.54" y="538.06" width="3.8" height="32.44" rx="1.9" fill="#e62bd9"/><rect x="390.56" y="538.71" width="3.8" height="31.79" rx="1.9" fill="#e62bd9"/><rect x="396.58" y="539.63" width="3.8" height="30.87" rx="1.9" fill="#e62bd9"/><rect x="402.60" y="538.71" width="3.8" height="31.79" rx="1.9" fill="#e62bd9"/><rect x="408.62" y="540.94" width="3.8" height="29.56" rx="1.9" fill="#e62bd9"/><rect x="414.64" y="538.06" width="3.8" height="32.44" rx="1.9" fill="#e62bd9"/><rect x="420.66" y="536.09" width="3.8" height="34.41" rx="1.9" fill="#e62bd9"/><rect x="426.68" y="537.66" width="3.8" height="32.84" rx="1.9" fill="#e62bd9"/><rect x="432.70" y="538.06" width="3.8" height="32.44" rx="1.9" fill="#e62bd9"/><rect x="438.72" y="536.75" width="3.8" height="33.75" rx="1.9" fill="#e62bd9"/><rect x="444.74" y="536.75" width="3.8" height="33.75" rx="1.9" fill="#e62bd9"/><rect x="450.76" y="537.14" width="3.8" height="33.36" rx="1.9" fill="#e62bd9"/><rect x="456.78" y="535.83" width="3.8" height="34.67" rx="1.9" fill="#e62bd9"/><rect x="462.80" y="541.08" width="3.8" height="29.42" rx="1.9" fill="#e62bd9"/><rect x="468.82" y="540.94" width="3.8" height="29.56" rx="1.9" fill="#e62bd9"/><rect x="474.84" y="536.75" width="3.8" height="33.75" rx="1.9" fill="#e62bd9"/><rect x="480.86" y="535.83" width="3.8" height="34.67" rx="1.9" fill="#e62bd9"/><rect x="486.88" y="536.75" width="3.8" height="33.75" rx="1.9" fill="#e62bd9"/><rect x="492.90" y="539.11" width="3.8" height="31.39" rx="1.9" fill="#e62bd9"/></svg>
<div class="t" style="left:529px;top:514px;font-size:13.8px;color:#2c323c">Средняя</div>
<div class="t" style="left:608px;width:60px;text-align:right;top:512.5px;font-size:11.5px;color:#ef5a4a">−2</div>
<div class="a" style="left:529px;top:531.5px;width:139px;height:1px;background:#eef1f6"></div>
<div class="a" style="left:529px;top:572px;width:139px;height:1px;background:#eef1f6"></div>
<div class="t" style="left:608px;width:60px;text-align:right;top:578.5px;font-size:13px;color:#2c323c">14</div>
<svg style="left:0;top:0" width="1372" height="777" viewBox="0 0 1372 777"><rect x="530.10" y="554.61" width="3.8" height="16.19" rx="1.9" fill="#c4d9fd"/><rect x="536.15" y="562.30" width="3.8" height="8.50" rx="1.9" fill="#c4d9fd"/><rect x="542.20" y="559.06" width="3.8" height="11.74" rx="1.9" fill="#1f74f2"/><rect x="548.25" y="558.25" width="3.8" height="12.55" rx="1.9" fill="#1f74f2"/><rect x="554.30" y="560.95" width="3.8" height="9.85" rx="1.9" fill="#1f74f2"/><rect x="560.35" y="560.68" width="3.8" height="10.12" rx="1.9" fill="#1f74f2"/><rect x="566.40" y="558.93" width="3.8" height="11.87" rx="1.9" fill="#1f74f2"/><rect x="572.45" y="561.35" width="3.8" height="9.45" rx="1.9" fill="#1f74f2"/><rect x="578.50" y="561.35" width="3.8" height="9.45" rx="1.9" fill="#1f74f2"/><rect x="584.55" y="557.31" width="3.8" height="13.49" rx="1.9" fill="#1f74f2"/><rect x="590.60" y="561.35" width="3.8" height="9.45" rx="1.9" fill="#1f74f2"/><rect x="596.65" y="561.35" width="3.8" height="9.45" rx="1.9" fill="#1f74f2"/><rect x="602.70" y="557.98" width="3.8" height="12.82" rx="1.9" fill="#1f74f2"/><rect x="608.75" y="560.68" width="3.8" height="10.12" rx="1.9" fill="#1f74f2"/><rect x="614.80" y="555.29" width="3.8" height="15.51" rx="1.9" fill="#1f74f2"/><rect x="620.85" y="555.96" width="3.8" height="14.84" rx="1.9" fill="#1f74f2"/><rect x="626.90" y="556.63" width="3.8" height="14.17" rx="1.9" fill="#1f74f2"/><rect x="632.95" y="562.70" width="3.8" height="8.10" rx="1.9" fill="#1f74f2"/><rect x="639.00" y="559.74" width="3.8" height="11.06" rx="1.9" fill="#1f74f2"/><rect x="645.05" y="557.31" width="3.8" height="13.49" rx="1.9" fill="#1f74f2"/><rect x="651.10" y="553.26" width="3.8" height="17.54" rx="1.9" fill="#1f74f2"/><rect x="657.15" y="562.03" width="3.8" height="8.77" rx="1.9" fill="#1f74f2"/><rect x="663.20" y="563.65" width="3.8" height="7.15" rx="1.9" fill="#1f74f2"/></svg>
<div class="t" style="left:700px;top:514px;font-size:13.8px;color:#2c323c">Медианная</div>
<div class="t" style="left:798px;width:60px;text-align:right;top:512.5px;font-size:11.5px;color:#3cc96a">+0.5</div>
<div class="a" style="left:700px;top:531.5px;width:158px;height:1px;background:#eef1f6"></div>
<div class="a" style="left:700px;top:572px;width:158px;height:1px;background:#eef1f6"></div>
<div class="t" style="left:798px;width:60px;text-align:right;top:578.5px;font-size:13px;color:#2c323c">9</div>
<svg style="left:0;top:0" width="1372" height="777" viewBox="0 0 1372 777"><rect x="701.60" y="559.55" width="3.8" height="11.45" rx="1.9" fill="#fde0c2"/><rect x="707.74" y="559.55" width="3.8" height="11.45" rx="1.9" fill="#fde0c2"/><rect x="713.88" y="555.39" width="3.8" height="15.61" rx="1.9" fill="#fde0c2"/><rect x="720.02" y="558.16" width="3.8" height="12.84" rx="1.9" fill="#fde0c2"/><rect x="726.16" y="559.83" width="3.8" height="11.17" rx="1.9" fill="#fde0c2"/><rect x="732.30" y="558.16" width="3.8" height="12.84" rx="1.9" fill="#fb9a1e"/><rect x="738.44" y="558.16" width="3.8" height="12.84" rx="1.9" fill="#fb9a1e"/><rect x="744.58" y="560.93" width="3.8" height="10.07" rx="1.9" fill="#fb9a1e"/><rect x="750.72" y="560.93" width="3.8" height="10.07" rx="1.9" fill="#fb9a1e"/><rect x="756.86" y="560.93" width="3.8" height="10.07" rx="1.9" fill="#fb9a1e"/><rect x="763.00" y="560.93" width="3.8" height="10.07" rx="1.9" fill="#fb9a1e"/><rect x="769.14" y="560.93" width="3.8" height="10.07" rx="1.9" fill="#fb9a1e"/><rect x="775.28" y="558.16" width="3.8" height="12.84" rx="1.9" fill="#fb9a1e"/><rect x="781.42" y="558.16" width="3.8" height="12.84" rx="1.9" fill="#fb9a1e"/><rect x="787.56" y="558.16" width="3.8" height="12.84" rx="1.9" fill="#fb9a1e"/><rect x="793.70" y="558.16" width="3.8" height="12.84" rx="1.9" fill="#fb9a1e"/><rect x="799.84" y="558.16" width="3.8" height="12.84" rx="1.9" fill="#fb9a1e"/><rect x="805.98" y="558.16" width="3.8" height="12.84" rx="1.9" fill="#fb9a1e"/><rect x="812.12" y="558.16" width="3.8" height="12.84" rx="1.9" fill="#fb9a1e"/><rect x="818.26" y="558.16" width="3.8" height="12.84" rx="1.9" fill="#fb9a1e"/><rect x="824.40" y="560.93" width="3.8" height="10.07" rx="1.9" fill="#fb9a1e"/><rect x="830.54" y="558.16" width="3.8" height="12.84" rx="1.9" fill="#fb9a1e"/><rect x="836.68" y="555.39" width="3.8" height="15.61" rx="1.9" fill="#fb9a1e"/><rect x="842.82" y="555.39" width="3.8" height="15.61" rx="1.9" fill="#fb9a1e"/><rect x="848.96" y="555.39" width="3.8" height="15.61" rx="1.9" fill="#fb9a1e"/><rect x="855.10" y="556.78" width="3.8" height="14.22" rx="1.9" fill="#fb9a1e"/></svg>
<div class="card" style="left:879px;top:502.0px;width:232px;height:32px;border-radius:9px;box-shadow:0 1px 3px rgba(120,130,150,.08)"></div>
<div class="a" style="left:884px;top:506.0px;width:44px;height:24px;border-radius:4px;background:#3497dc"></div>
<div class="t" style="left:884px;width:44px;text-align:center;top:511.5px;font-size:12.8px;color:#fff">1-3</div>
<div class="t" style="left:930px;width:50px;text-align:center;top:511.5px;font-size:12.8px;color:#a5adb9">17%</div>
<div class="vd" style="left:977px;top:510.0px;height:16px;background:#d5dae2"></div>
<div class="t" style="left:991px;width:50px;text-align:center;top:511.5px;font-size:13.2px;color:#2c323c">32</div>
<div class="t" style="left:1055px;width:50px;text-align:center;top:511.5px;font-size:13.2px;color:#37c464">+18</div>
<div class="card" style="left:879px;top:536.2px;width:232px;height:32px;border-radius:9px;box-shadow:0 1px 3px rgba(120,130,150,.08)"></div>
<div class="a" style="left:884px;top:540.2px;width:44px;height:24px;border-radius:4px;background:#24916b"></div>
<div class="t" style="left:884px;width:44px;text-align:center;top:545.7px;font-size:12.8px;color:#fff">1-10</div>
<div class="t" style="left:930px;width:50px;text-align:center;top:545.7px;font-size:12.8px;color:#a5adb9">66%</div>
<div class="vd" style="left:977px;top:544.2px;height:16px;background:#d5dae2"></div>
<div class="t" style="left:991px;width:50px;text-align:center;top:545.7px;font-size:13.2px;color:#2c323c">126</div>
<div class="t" style="left:1055px;width:50px;text-align:center;top:545.7px;font-size:13.2px;color:#37c464">+40</div>
<div class="card" style="left:879px;top:570.4px;width:232px;height:32px;border-radius:9px;box-shadow:0 1px 3px rgba(120,130,150,.08)"></div>
<div class="a" style="left:884px;top:574.4px;width:44px;height:24px;border-radius:4px;background:#1ebc9a"></div>
<div class="t" style="left:884px;width:44px;text-align:center;top:579.9px;font-size:12.8px;color:#fff">11-30</div>
<div class="t" style="left:930px;width:50px;text-align:center;top:579.9px;font-size:12.8px;color:#a5adb9">27%</div>
<div class="vd" style="left:977px;top:578.4px;height:16px;background:#d5dae2"></div>
<div class="t" style="left:991px;width:50px;text-align:center;top:579.9px;font-size:13.2px;color:#2c323c">51</div>
<div class="t" style="left:1055px;width:50px;text-align:center;top:579.9px;font-size:13.2px;color:#37c464">+4</div>
<div class="card" style="left:1123px;top:502.0px;width:232px;height:32px;border-radius:9px;box-shadow:0 1px 3px rgba(120,130,150,.08)"></div>
<div class="a" style="left:1128px;top:506.0px;width:44px;height:24px;border-radius:4px;background:#a6df9f"></div>
<div class="t" style="left:1128px;width:44px;text-align:center;top:511.5px;font-size:12.8px;color:#fff">31-50</div>
<div class="t" style="left:1174px;width:50px;text-align:center;top:511.5px;font-size:12.8px;color:#a5adb9">2%</div>
<div class="vd" style="left:1221px;top:510.0px;height:16px;background:#d5dae2"></div>
<div class="t" style="left:1235px;width:50px;text-align:center;top:511.5px;font-size:13.2px;color:#2c323c">4</div>
<div class="t" style="left:1299px;width:50px;text-align:center;top:511.5px;font-size:13.2px;color:#37c464">+1</div>
<div class="card" style="left:1123px;top:536.2px;width:232px;height:32px;border-radius:9px;box-shadow:0 1px 3px rgba(120,130,150,.08)"></div>
<div class="a" style="left:1128px;top:540.2px;width:44px;height:24px;border-radius:4px;background:#c9d6d5"></div>
<div class="t" style="left:1128px;width:44px;text-align:center;top:545.7px;font-size:12.8px;color:#fff">51-100</div>
<div class="t" style="left:1174px;width:50px;text-align:center;top:545.7px;font-size:12.8px;color:#a5adb9">0.52%</div>
<div class="vd" style="left:1221px;top:544.2px;height:16px;background:#d5dae2"></div>
<div class="t" style="left:1235px;width:50px;text-align:center;top:545.7px;font-size:13.2px;color:#2c323c">1</div>
<div class="t" style="left:1299px;width:50px;text-align:center;top:545.7px;font-size:13.2px;color:#37c464">+1</div>
<div class="card" style="left:1123px;top:570.4px;width:232px;height:32px;border-radius:9px;box-shadow:0 1px 3px rgba(120,130,150,.08)"></div>
<div class="a" style="left:1128px;top:574.4px;width:44px;height:24px;border-radius:4px;background:#fcc94e"></div>
<div class="t" style="left:1128px;width:44px;text-align:center;top:579.9px;font-size:12.8px;color:#fff">100+</div>
<div class="t" style="left:1174px;width:50px;text-align:center;top:579.9px;font-size:12.8px;color:#a5adb9">5%</div>
<div class="vd" style="left:1221px;top:578.4px;height:16px;background:#d5dae2"></div>
<div class="t" style="left:1235px;width:50px;text-align:center;top:579.9px;font-size:13.2px;color:#2c323c">10</div>
<div class="t" style="left:1299px;width:50px;text-align:center;top:579.9px;font-size:13.2px;color:#37c464">+6</div>
<!-- table -->
<div class="card" style="left:76px;top:614px;width:1278px;height:200px;overflow:hidden">
</div>
<svg style="left:98px;top:626px" width="22" height="22" viewBox="0 0 22 22"><g class="ic" style="stroke:#8d96a5;stroke-width:1.8"><circle cx="9" cy="9" r="7.6"/><path d="M14.6 14.6l5.6 5.6"/></g></svg>
<div class="t" style="left:130px;top:629.5px;font-size:14.6px;color:#8a94a4">Поиск по запросам</div>
<div class="a" style="left:766px;top:621px;width:161px;height:32px;background:#eef1f5;border-radius:8px;overflow:hidden"><div class="a" style="left:0;top:0;width:76px;height:32px;background:#d3dae4"></div></div>
<div class="t" style="left:774px;top:629.5px;font-size:14.6px;color:#2c323c">Позиции</div>
<div class="t" style="left:850px;top:629.5px;font-size:14.6px;color:#2c323c">Сниппеты</div>
<svg style="left:937px;top:626px" width="19" height="21" viewBox="0 0 19 21"><g class="ic bl" style="stroke-width:1.9"><path d="M5 19V1.5M1 5.5L5 1.5 9 5.5"/><path d="M14 2v17.5M10 15.5l4 4 4-4"/></g></svg>
<div class="t" style="left:962px;top:629.5px;font-size:14.6px;color:#2c323c">Сортировка</div>
<svg style="left:1061px;top:627px" width="19" height="19" viewBox="0 0 19 19"><path class="ic bl" style="stroke-width:1.9" d="M1.5 1.5h16l-6 7.5v8.5l-4-2V9z"/></svg>
<div class="t" style="left:1087px;top:629.5px;font-size:14.6px;color:#2c323c">Фильтр</div>
<svg style="left:1163px;top:626px" width="21" height="21" viewBox="0 0 21 21"><g class="ic bl" style="stroke-width:1.9"><rect x="1" y="1" width="19" height="19" rx="2.5"/><path d="M1 8h19M9 8v12"/></g></svg>
<div class="t" style="left:1190px;top:629.5px;font-size:14.6px;color:#2c323c">Настройки вида</div>
<svg style="left:1316px;top:626px" width="21" height="21" viewBox="0 0 21 21"><g class="ic bl" style="stroke-width:2"><path d="M5.6 11L2.6 8Q1.2 6.4 2.8 4.6L5 2.6Q7 1 8.8 2.6L11.3 5.1M14.4 9.2L17.4 12.2Q18.8 13.8 17.2 15.6L15 17.6Q13 19.2 11.2 17.6L8.7 15.1M8.8 11L11.3 9.1"/></g><path d="M14.2 1.4L19.2 5.4H14.2zM5.8 18.8L0.8 14.8H5.8z" fill="#1f77fa"/></svg>
<div class="a" style="left:76px;top:660px;width:1278px;height:1px;background:#dfe4eb"></div>
<div class="a" style="left:76px;top:710px;width:1278px;height:1px;background:#dfe4eb"></div>
<div class="a" style="left:76px;top:750px;width:427px;height:1px;background:#dfe4eb"></div>
<div class="a" style="left:125.0px;top:660px;width:1px;height:120px;background:#dfe4eb"></div>
<div class="a" style="left:353.5px;top:660px;width:1px;height:120px;background:#dfe4eb"></div>
<div class="a" style="left:428.5px;top:660px;width:1px;height:120px;background:#dfe4eb"></div>
<div class="a" style="left:503px;top:711px;width:851px;height:70px;background:#b2d1fb"></div>
<div class="a" style="left:503px;top:750px;width:851px;height:1px;background:#bdcadb"></div>
<div class="a" style="left:502.7px;top:660px;width:1px;height:51px;background:#dfe4eb"></div>
<div class="t" style="left:506.2px;top:667.3px;font-size:14.1px;color:#2c323c">12.04.2023</div>
<div class="t" style="left:509.2px;top:688px;font-size:9.6px;color:#c5cbd5">1-10</div>
<div class="t" style="left:509.2px;top:698px;font-size:11.2px;color:#c5cbd5">66%</div>
<div class="t" style="left:526.2px;width:50px;text-align:right;top:693px;font-size:12px;color:#c0c7d1">95</div>
<svg style="left:548.8px;top:692.5px" width="10" height="11" viewBox="0 0 10 11"><circle cx="5" cy="3" r="2.6" fill="#c3cad4"/><path d="M.5 10.6Q.5 6.4 5 6.4t4.5 4.2z" fill="#c3cad4"/></svg>
<div class="t" style="left:511.2px;top:723.5px;font-size:16px;color:#2c323c">1</div>
<div class="t" style="left:522.2px;width:50px;text-align:right;top:725.0px;font-size:12px;color:#8893a3">72</div>
<svg style="left:545.8px;top:726.0px" width="10" height="11" viewBox="0 0 10 11"><g fill="none" stroke="#8d97a6" stroke-width="1.1"><circle cx="5" cy="3" r="2.3"/><path d="M1 10.4Q1 6.6 5 6.6t4 3.8z"/></g></svg>
<div class="t" style="left:511.2px;top:762.0px;font-size:16px;color:#2c323c">1</div>
<div class="t" style="left:522.2px;width:50px;text-align:right;top:763.5px;font-size:12px;color:#8893a3">11</div>
<svg style="left:545.8px;top:764.5px" width="10" height="11" viewBox="0 0 10 11"><g fill="none" stroke="#8d97a6" stroke-width="1.1"><circle cx="5" cy="3" r="2.3"/><path d="M1 10.4Q1 6.6 5 6.6t4 3.8z"/></g></svg>
<div class="a" style="left:580.1px;top:660px;width:1px;height:51px;background:#dfe4eb"></div>
<div class="a" style="left:580.1px;top:711px;width:1px;height:70px;background:#bfcbdb"></div>
<div class="t" style="left:583.6px;top:667.3px;font-size:14.1px;color:#2c323c">11.04.2023</div>
<div class="t" style="left:586.6px;top:688px;font-size:9.6px;color:#c5cbd5">1-10</div>
<div class="t" style="left:586.6px;top:698px;font-size:11.2px;color:#c5cbd5">67%</div>
<div class="t" style="left:603.6px;width:50px;text-align:right;top:693px;font-size:12px;color:#c0c7d1">111</div>
<svg style="left:619.5px;top:692.5px" width="10" height="11" viewBox="0 0 10 11"><circle cx="5" cy="3" r="2.6" fill="#c3cad4"/><path d="M.5 10.6Q.5 6.4 5 6.4t4.5 4.2z" fill="#c3cad4"/></svg>
<div class="t" style="left:588.6px;top:723.5px;font-size:16px;color:#2c323c">1</div>
<div class="t" style="left:599.6px;width:50px;text-align:right;top:725.0px;font-size:12px;color:#8893a3">87</div>
<svg style="left:623.2px;top:726.0px" width="10" height="11" viewBox="0 0 10 11"><g fill="none" stroke="#8d97a6" stroke-width="1.1"><circle cx="5" cy="3" r="2.3"/><path d="M1 10.4Q1 6.6 5 6.6t4 3.8z"/></g></svg>
<div class="t" style="left:588.6px;top:762.0px;font-size:16px;color:#2c323c">1</div>
<div class="t" style="left:599.6px;width:50px;text-align:right;top:763.5px;font-size:12px;color:#8893a3">12</div>
<svg style="left:623.2px;top:764.5px" width="10" height="11" viewBox="0 0 10 11"><g fill="none" stroke="#8d97a6" stroke-width="1.1"><circle cx="5" cy="3" r="2.3"/><path d="M1 10.4Q1 6.6 5 6.6t4 3.8z"/></g></svg>
<div class="a" style="left:657.4px;top:660px;width:1px;height:51px;background:#dfe4eb"></div>
<div class="a" style="left:657.4px;top:711px;width:1px;height:70px;background:#bfcbdb"></div>
<div class="t" style="left:660.9px;top:667.3px;font-size:14.1px;color:#2c323c">10.04.2023</div>
<div class="t" style="left:663.9px;top:688px;font-size:9.6px;color:#c5cbd5">1-10</div>
<div class="t" style="left:663.9px;top:698px;font-size:11.2px;color:#c5cbd5">77%</div>
<div class="t" style="left:680.9px;width:50px;text-align:right;top:693px;font-size:12px;color:#c0c7d1">156</div>
<svg style="left:696.8px;top:692.5px" width="10" height="11" viewBox="0 0 10 11"><circle cx="5" cy="3" r="2.6" fill="#c3cad4"/><path d="M.5 10.6Q.5 6.4 5 6.4t4.5 4.2z" fill="#c3cad4"/></svg>
<div class="t" style="left:665.9px;top:723.5px;font-size:16px;color:#2c323c">1</div>
<div class="t" style="left:676.9px;width:50px;text-align:right;top:725.0px;font-size:12px;color:#8893a3">122</div>
<svg style="left:693.8px;top:726.0px" width="10" height="11" viewBox="0 0 10 11"><g fill="none" stroke="#8d97a6" stroke-width="1.1"><circle cx="5" cy="3" r="2.3"/><path d="M1 10.4Q1 6.6 5 6.6t4 3.8z"/></g></svg>
<div class="t" style="left:665.9px;top:762.0px;font-size:16px;color:#2c323c">1</div>
<div class="t" style="left:676.9px;width:50px;text-align:right;top:763.5px;font-size:12px;color:#8893a3">20</div>
<svg style="left:700.5px;top:764.5px" width="10" height="11" viewBox="0 0 10 11"><g fill="none" stroke="#8d97a6" stroke-width="1.1"><circle cx="5" cy="3" r="2.3"/><path d="M1 10.4Q1 6.6 5 6.6t4 3.8z"/></g></svg>
<div class="a" style="left:734.8px;top:660px;width:1px;height:51px;background:#dfe4eb"></div>
<div class="a" style="left:734.8px;top:711px;width:1px;height:70px;background:#bfcbdb"></div>
<div class="t" style="left:738.3px;top:667.3px;font-size:14.1px;color:#2c323c">08.04.2023</div>
<div class="t" style="left:741.3px;top:688px;font-size:9.6px;color:#c5cbd5">1-10</div>
<div class="t" style="left:741.3px;top:698px;font-size:11.2px;color:#c5cbd5">76%</div>
<div class="t" style="left:758.3px;width:50px;text-align:right;top:693px;font-size:12px;color:#c0c7d1">42</div>
<svg style="left:780.9px;top:692.5px" width="10" height="11" viewBox="0 0 10 11"><circle cx="5" cy="3" r="2.6" fill="#c3cad4"/><path d="M.5 10.6Q.5 6.4 5 6.4t4.5 4.2z" fill="#c3cad4"/></svg>
<div class="t" style="left:743.3px;top:723.5px;font-size:16px;color:#2c323c">1</div>
<div class="t" style="left:754.3px;width:50px;text-align:right;top:725.0px;font-size:12px;color:#8893a3">33</div>
<svg style="left:777.9px;top:726.0px" width="10" height="11" viewBox="0 0 10 11"><g fill="none" stroke="#8d97a6" stroke-width="1.1"><circle cx="5" cy="3" r="2.3"/><path d="M1 10.4Q1 6.6 5 6.6t4 3.8z"/></g></svg>
<div class="t" style="left:743.3px;top:762.0px;font-size:16px;color:#2c323c">1</div>
<div class="t" style="left:754.3px;width:50px;text-align:right;top:763.5px;font-size:12px;color:#8893a3">3</div>
<svg style="left:784.6px;top:764.5px" width="10" height="11" viewBox="0 0 10 11"><g fill="none" stroke="#8d97a6" stroke-width="1.1"><circle cx="5" cy="3" r="2.3"/><path d="M1 10.4Q1 6.6 5 6.6t4 3.8z"/></g></svg>
<div class="a" style="left:812.1px;top:660px;width:1px;height:51px;background:#dfe4eb"></div>
<div class="a" style="left:812.1px;top:711px;width:1px;height:70px;background:#bfcbdb"></div>
<div class="t" style="left:815.6px;top:667.3px;font-size:14.1px;color:#2c323c">06.04.2023</div>
<div class="t" style="left:818.6px;top:688px;font-size:9.6px;color:#c5cbd5">1-10</div>
<div class="t" style="left:818.6px;top:698px;font-size:11.2px;color:#c5cbd5">59%</div>
<div class="t" style="left:835.6px;width:50px;text-align:right;top:693px;font-size:12px;color:#c0c7d1">96</div>
<svg style="left:858.2px;top:692.5px" width="10" height="11" viewBox="0 0 10 11"><circle cx="5" cy="3" r="2.6" fill="#c3cad4"/><path d="M.5 10.6Q.5 6.4 5 6.4t4.5 4.2z" fill="#c3cad4"/></svg>
<div class="t" style="left:820.6px;top:723.5px;font-size:16px;color:#2c323c">1</div>
<div class="t" style="left:831.6px;width:50px;text-align:right;top:725.0px;font-size:12px;color:#8893a3">76</div>
<svg style="left:855.2px;top:726.0px" width="10" height="11" viewBox="0 0 10 11"><g fill="none" stroke="#8d97a6" stroke-width="1.1"><circle cx="5" cy="3" r="2.3"/><path d="M1 10.4Q1 6.6 5 6.6t4 3.8z"/></g></svg>
<div class="t" style="left:820.6px;top:762.0px;font-size:16px;color:#2c323c">1</div>
<div class="t" style="left:831.6px;width:50px;text-align:right;top:763.5px;font-size:12px;color:#8893a3">11</div>
<svg style="left:855.2px;top:764.5px" width="10" height="11" viewBox="0 0 10 11"><g fill="none" stroke="#8d97a6" stroke-width="1.1"><circle cx="5" cy="3" r="2.3"/><path d="M1 10.4Q1 6.6 5 6.6t4 3.8z"/></g></svg>
<div class="a" style="left:889.5px;top:660px;width:1px;height:51px;background:#dfe4eb"></div>
<div class="a" style="left:889.5px;top:711px;width:1px;height:70px;background:#bfcbdb"></div>
<div class="t" style="left:893.0px;top:667.3px;font-size:14.1px;color:#2c323c">30.03.2023</div>
<div class="t" style="left:896.0px;top:688px;font-size:9.6px;color:#c5cbd5">1-10</div>
<div class="t" style="left:896.0px;top:698px;font-size:11.2px;color:#c5cbd5">54%</div>
<div class="t" style="left:913.0px;width:50px;text-align:right;top:693px;font-size:12px;color:#c0c7d1">95</div>
<svg style="left:935.6px;top:692.5px" width="10" height="11" viewBox="0 0 10 11"><circle cx="5" cy="3" r="2.6" fill="#c3cad4"/><path d="M.5 10.6Q.5 6.4 5 6.4t4.5 4.2z" fill="#c3cad4"/></svg>
<div class="t" style="left:898.0px;top:723.5px;font-size:16px;color:#2c323c">1</div>
<div class="t" style="left:909.0px;width:50px;text-align:right;top:725.0px;font-size:12px;color:#8893a3">80</div>
<svg style="left:932.6px;top:726.0px" width="10" height="11" viewBox="0 0 10 11"><g fill="none" stroke="#8d97a6" stroke-width="1.1"><circle cx="5" cy="3" r="2.3"/><path d="M1 10.4Q1 6.6 5 6.6t4 3.8z"/></g></svg>
<div class="t" style="left:898.0px;top:762.0px;font-size:16px;color:#2c323c">1</div>
<div class="t" style="left:909.0px;width:50px;text-align:right;top:763.5px;font-size:12px;color:#8893a3">8</div>
<svg style="left:939.3px;top:764.5px" width="10" height="11" viewBox="0 0 10 11"><g fill="none" stroke="#8d97a6" stroke-width="1.1"><circle cx="5" cy="3" r="2.3"/><path d="M1 10.4Q1 6.6 5 6.6t4 3.8z"/></g></svg>
<div class="a" style="left:966.9px;top:660px;width:1px;height:51px;background:#dfe4eb"></div>
<div class="a" style="left:966.9px;top:711px;width:1px;height:70px;background:#bfcbdb"></div>
<div class="t" style="left:970.4px;top:667.3px;font-size:14.1px;color:#2c323c">29.03.2023</div>
<div class="t" style="left:973.4px;top:688px;font-size:9.6px;color:#c5cbd5">1-10</div>
<div class="t" style="left:973.4px;top:698px;font-size:11.2px;color:#c5cbd5">64%</div>
<div class="t" style="left:990.4px;width:50px;text-align:right;top:693px;font-size:12px;color:#c0c7d1">97</div>
<svg style="left:1013.0px;top:692.5px" width="10" height="11" viewBox="0 0 10 11"><circle cx="5" cy="3" r="2.6" fill="#c3cad4"/><path d="M.5 10.6Q.5 6.4 5 6.4t4.5 4.2z" fill="#c3cad4"/></svg>
<div class="t" style="left:975.4px;top:723.5px;font-size:16px;color:#2c323c">1</div>
<div class="t" style="left:986.4px;width:50px;text-align:right;top:725.0px;font-size:12px;color:#8893a3">79</div>
<svg style="left:1010.0px;top:726.0px" width="10" height="11" viewBox="0 0 10 11"><g fill="none" stroke="#8d97a6" stroke-width="1.1"><circle cx="5" cy="3" r="2.3"/><path d="M1 10.4Q1 6.6 5 6.6t4 3.8z"/></g></svg>
<div class="t" style="left:975.4px;top:762.0px;font-size:16px;color:#2c323c">1</div>
<div class="t" style="left:986.4px;width:50px;text-align:right;top:763.5px;font-size:12px;color:#8893a3">10</div>
<svg style="left:1010.0px;top:764.5px" width="10" height="11" viewBox="0 0 10 11"><g fill="none" stroke="#8d97a6" stroke-width="1.1"><circle cx="5" cy="3" r="2.3"/><path d="M1 10.4Q1 6.6 5 6.6t4 3.8z"/></g></svg>
<div class="a" style="left:1044.2px;top:660px;width:1px;height:51px;background:#dfe4eb"></div>
<div class="a" style="left:1044.2px;top:711px;width:1px;height:70px;background:#bfcbdb"></div>
<div class="t" style="left:1047.7px;top:667.3px;font-size:14.1px;color:#2c323c">28.03.2023</div>
<div class="t" style="left:1050.7px;top:688px;font-size:9.6px;color:#c5cbd5">1-10</div>
<div class="t" style="left:1050.7px;top:698px;font-size:11.2px;color:#c5cbd5">59%</div>
<div class="t" style="left:1067.7px;width:50px;text-align:right;top:693px;font-size:12px;color:#c0c7d1">104</div>
<svg style="left:1083.6px;top:692.5px" width="10" height="11" viewBox="0 0 10 11"><circle cx="5" cy="3" r="2.6" fill="#c3cad4"/><path d="M.5 10.6Q.5 6.4 5 6.4t4.5 4.2z" fill="#c3cad4"/></svg>
<div class="t" style="left:1052.7px;top:723.5px;font-size:16px;color:#2c323c">1</div>
<div class="t" style="left:1063.7px;width:50px;text-align:right;top:725.0px;font-size:12px;color:#8893a3">86</div>
<svg style="left:1087.3px;top:726.0px" width="10" height="11" viewBox="0 0 10 11"><g fill="none" stroke="#8d97a6" stroke-width="1.1"><circle cx="5" cy="3" r="2.3"/><path d="M1 10.4Q1 6.6 5 6.6t4 3.8z"/></g></svg>
<div class="t" style="left:1052.7px;top:762.0px;font-size:16px;color:#2c323c">1</div>
<div class="t" style="left:1063.7px;width:50px;text-align:right;top:763.5px;font-size:12px;color:#8893a3">10</div>
<svg style="left:1087.3px;top:764.5px" width="10" height="11" viewBox="0 0 10 11"><g fill="none" stroke="#8d97a6" stroke-width="1.1"><circle cx="5" cy="3" r="2.3"/><path d="M1 10.4Q1 6.6 5 6.6t4 3.8z"/></g></svg>
<div class="a" style="left:1121.6px;top:660px;width:1px;height:51px;background:#dfe4eb"></div>
<div class="a" style="left:1121.6px;top:711px;width:1px;height:70px;background:#bfcbdb"></div>
<div class="t" style="left:1125.1px;top:667.3px;font-size:14.1px;color:#2c323c">27.03.2023</div>
<div class="t" style="left:1128.1px;top:688px;font-size:9.6px;color:#c5cbd5">1-10</div>
<div class="t" style="left:1128.1px;top:698px;font-size:11.2px;color:#c5cbd5">65%</div>
<div class="t" style="left:1145.1px;width:50px;text-align:right;top:693px;font-size:12px;color:#c0c7d1">121</div>
<svg style="left:1161.0px;top:692.5px" width="10" height="11" viewBox="0 0 10 11"><circle cx="5" cy="3" r="2.6" fill="#c3cad4"/><path d="M.5 10.6Q.5 6.4 5 6.4t4.5 4.2z" fill="#c3cad4"/></svg>
<div class="t" style="left:1130.1px;top:723.5px;font-size:16px;color:#2c323c">1</div>
<div class="t" style="left:1141.1px;width:50px;text-align:right;top:725.0px;font-size:12px;color:#8893a3">91</div>
<svg style="left:1164.7px;top:726.0px" width="10" height="11" viewBox="0 0 10 11"><g fill="none" stroke="#8d97a6" stroke-width="1.1"><circle cx="5" cy="3" r="2.3"/><path d="M1 10.4Q1 6.6 5 6.6t4 3.8z"/></g></svg>
<div class="t" style="left:1130.1px;top:762.0px;font-size:16px;color:#2c323c">1</div>
<div class="t" style="left:1141.1px;width:50px;text-align:right;top:763.5px;font-size:12px;color:#8893a3">15</div>
<svg style="left:1164.7px;top:764.5px" width="10" height="11" viewBox="0 0 10 11"><g fill="none" stroke="#8d97a6" stroke-width="1.1"><circle cx="5" cy="3" r="2.3"/><path d="M1 10.4Q1 6.6 5 6.6t4 3.8z"/></g></svg>
<div class="a" style="left:1198.9px;top:660px;width:1px;height:51px;background:#dfe4eb"></div>
<div class="a" style="left:1198.9px;top:711px;width:1px;height:70px;background:#bfcbdb"></div>
<div class="t" style="left:1202.4px;top:667.3px;font-size:14.1px;color:#2c323c">23.03.2023</div>
<div class="t" style="left:1205.4px;top:688px;font-size:9.6px;color:#c5cbd5">1-10</div>
<div class="t" style="left:1205.4px;top:698px;font-size:11.2px;color:#c5cbd5">69%</div>
<div class="t" style="left:1222.4px;width:50px;text-align:right;top:693px;font-size:12px;color:#c0c7d1">119</div>
<svg style="left:1238.3px;top:692.5px" width="10" height="11" viewBox="0 0 10 11"><circle cx="5" cy="3" r="2.6" fill="#c3cad4"/><path d="M.5 10.6Q.5 6.4 5 6.4t4.5 4.2z" fill="#c3cad4"/></svg>
<div class="t" style="left:1207.4px;top:723.5px;font-size:16px;color:#2c323c">1</div>
<div class="t" style="left:1218.4px;width:50px;text-align:right;top:725.0px;font-size:12px;color:#8893a3">91</div>
<svg style="left:1242.0px;top:726.0px" width="10" height="11" viewBox="0 0 10 11"><g fill="none" stroke="#8d97a6" stroke-width="1.1"><circle cx="5" cy="3" r="2.3"/><path d="M1 10.4Q1 6.6 5 6.6t4 3.8z"/></g></svg>
<div class="t" style="left:1207.4px;top:762.0px;font-size:16px;color:#2c323c">1</div>
<div class="t" style="left:1218.4px;width:50px;text-align:right;top:763.5px;font-size:12px;color:#8893a3">10</div>
<svg style="left:1242.0px;top:764.5px" width="10" height="11" viewBox="0 0 10 11"><g fill="none" stroke="#8d97a6" stroke-width="1.1"><circle cx="5" cy="3" r="2.3"/><path d="M1 10.4Q1 6.6 5 6.6t4 3.8z"/></g></svg>
<div class="a" style="left:1276.3px;top:660px;width:1px;height:51px;background:#dfe4eb"></div>
<div class="a" style="left:1276.3px;top:711px;width:1px;height:70px;background:#bfcbdb"></div>
<div class="t" style="left:1279.8px;top:667.3px;font-size:14.1px;color:#2c323c">22.03.2023</div>
<div class="t" style="left:1282.8px;top:688px;font-size:9.6px;color:#c5cbd5">1-10</div>
<div class="t" style="left:1282.8px;top:698px;font-size:11.2px;color:#c5cbd5">66%</div>
<div class="t" style="left:1299.8px;width:50px;text-align:right;top:693px;font-size:12px;color:#c0c7d1">118</div>
<svg style="left:1315.7px;top:692.5px" width="10" height="11" viewBox="0 0 10 11"><circle cx="5" cy="3" r="2.6" fill="#c3cad4"/><path d="M.5 10.6Q.5 6.4 5 6.4t4.5 4.2z" fill="#c3cad4"/></svg>
<div class="t" style="left:1284.8px;top:723.5px;font-size:16px;color:#2c323c">1</div>
<div class="t" style="left:1295.8px;width:50px;text-align:right;top:725.0px;font-size:12px;color:#8893a3">84</div>
<svg style="left:1319.4px;top:726.0px" width="10" height="11" viewBox="0 0 10 11"><g fill="none" stroke="#8d97a6" stroke-width="1.1"><circle cx="5" cy="3" r="2.3"/><path d="M1 10.4Q1 6.6 5 6.6t4 3.8z"/></g></svg>
<div class="t" style="left:1284.8px;top:762.0px;font-size:16px;color:#2c323c">1</div>
<div class="t" style="left:1295.8px;width:50px;text-align:right;top:763.5px;font-size:12px;color:#8893a3">18</div>
<svg style="left:1319.4px;top:764.5px" width="10" height="11" viewBox="0 0 10 11"><g fill="none" stroke="#8d97a6" stroke-width="1.1"><circle cx="5" cy="3" r="2.3"/><path d="M1 10.4Q1 6.6 5 6.6t4 3.8z"/></g></svg>
<svg style="left:93px;top:677px" width="18" height="18" viewBox="0 0 18 18"><g class="ic" style="stroke:#c3cad4;stroke-width:1.5"><circle cx="9" cy="9" r="6.6"/><path d="M9 .8v4M9 13.2v4M.8 9h4M13.2 9h4"/></g><circle cx="9" cy="9" r="1" fill="#c3cad4"/></svg>
<div class="t" style="left:134px;top:678px;font-size:15.6px;font-weight:bold;color:#1f252d">Запросы</div>
<div class="t" style="left:226px;top:679px;font-size:14px;color:#9aa3b1">(192)</div>
<div class="t" style="left:353.5px;width:75px;text-align:center;top:670px;font-size:13.6px;color:#2c323c">Частота</div>
<div class="t" style="left:353.5px;width:75px;text-align:center;top:688px;font-size:13px;color:#3b8af0">"!Ч"</div>
<svg style="left:461px;top:680px" width="9" height="12" viewBox="0 0 9 12"><circle cx="4.5" cy="3" r="2.8" fill="#bcc4cf"/><path d="M0 11.5Q0 7 4.5 7T9 11.5z" fill="#bcc4cf"/></svg>
<div class="a" style="left:76px;top:711px;width:3px;height:70px;background:#f0584a"></div>
<svg style="left:95px;top:726.5px" width="13" height="10" viewBox="0 0 13 10"><path d="M2 5.4l3 2.9 6-6.4" fill="none" stroke="#21c25e" stroke-width="1.9" stroke-linecap="round" stroke-linejoin="round"/></svg>
<div class="t" style="left:134px;top:724.5px;font-size:13.6px;color:#2c323c">топвизор</div>
<div class="t" style="left:353.5px;width:75px;text-align:center;top:724.0px;font-size:14.2px;color:#2c323c">1418</div>
<div class="t" style="left:428.5px;width:75px;text-align:center;top:724.0px;font-size:14.2px;color:#2c323c">1660</div>
<svg style="left:95px;top:765.0px" width="13" height="10" viewBox="0 0 13 10"><path d="M2 5.4l3 2.9 6-6.4" fill="none" stroke="#21c25e" stroke-width="1.9" stroke-linecap="round" stroke-linejoin="round"/></svg>
<div class="t" style="left:134px;top:763.0px;font-size:13.6px;color:#2c323c">topvisor</div>
<div class="t" style="left:353.5px;width:75px;text-align:center;top:762.5px;font-size:14.2px;color:#2c323c">153</div>
<div class="t" style="left:428.5px;width:75px;text-align:center;top:762.5px;font-size:14.2px;color:#2c323c">245</div>
<div class="a" style="left:76px;top:766px;width:1278px;height:11px;background:linear-gradient(rgba(60,70,90,0),rgba(60,70,90,.10))"></div>
<div class="a" style="left:434px;top:771px;width:504px;height:40px;background:#fff;border-radius:12px 12px 0 0;box-shadow:0 -2px 6px rgba(60,70,90,.18)"></div>
</body></html>
